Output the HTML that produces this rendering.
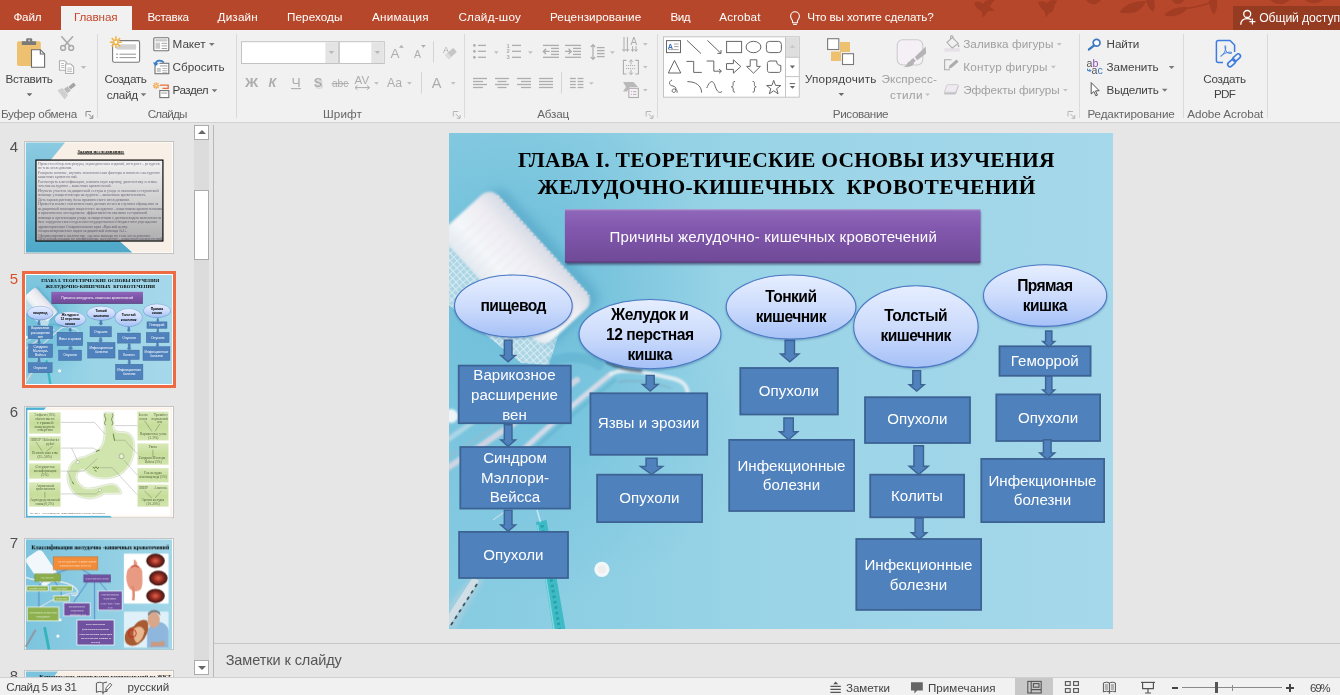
<!DOCTYPE html>
<html><head><meta charset="utf-8"><title>PowerPoint</title><style>
*{box-sizing:border-box;margin:0;padding:0}
html,body{width:1340px;height:695px;overflow:hidden;background:#e6e6e6;font-family:"Liberation Sans",sans-serif}
.t{position:absolute;white-space:nowrap;display:block}
.a{position:absolute}
.dd{position:absolute;width:0;height:0;border-left:3px solid transparent;border-right:3px solid transparent;border-top:3px solid #777}
.sep{position:absolute;width:1px;background:#dadada;top:34px;height:84px}
svg{position:absolute;overflow:visible}

.slide{position:absolute;width:663.5px;height:496.4px;overflow:hidden;background:#97d2e6}
.slide .el{position:absolute;border-radius:50%;border:1px solid #4a78c4;background:linear-gradient(#e6eeff 0%,#cddcfc 50%,#a6c1f7 100%);box-shadow:0 1px 1.5px rgba(40,70,140,.5)}
.slide .bx{position:absolute;background:#4f81bd;border:2px solid #40679a}
.slide .tx{position:absolute;white-space:pre;text-align:center;transform:translateX(-50%)}
</style></head><body><div id="root" style="position:absolute;left:0;top:0;width:1340px;height:695px;overflow:hidden;will-change:transform">
<div class="a" style="left:0;top:0;width:1340px;height:30px;background:#b7472a"></div>
<div class="a" style="left:61px;top:6px;width:71px;height:24px;background:#f1f1f1"></div>
<div class="a" style="left:1233px;top:6px;width:107px;height:24px;background:#943b22"></div>
<span class="t" style="left:13.4px;top:11.4px;font:11.7px/1 'Liberation Sans',sans-serif;height:11.7px;color:#fff;letter-spacing:-0.166px;">Файл</span>
<span class="t" style="left:73.9px;top:11.4px;font:11.7px/1 'Liberation Sans',sans-serif;height:11.7px;color:#c8472b;letter-spacing:-0.133px;">Главная</span>
<span class="t" style="left:147.4px;top:11.4px;font:11.7px/1 'Liberation Sans',sans-serif;height:11.7px;color:#fff;letter-spacing:-0.312px;">Вставка</span>
<span class="t" style="left:217.6px;top:11.4px;font:11.7px/1 'Liberation Sans',sans-serif;height:11.7px;color:#fff;letter-spacing:0.162px;">Дизайн</span>
<span class="t" style="left:287.1px;top:11.4px;font:11.7px/1 'Liberation Sans',sans-serif;height:11.7px;color:#fff;letter-spacing:0.065px;">Переходы</span>
<span class="t" style="left:372.0px;top:11.4px;font:11.7px/1 'Liberation Sans',sans-serif;height:11.7px;color:#fff;letter-spacing:0.234px;">Анимация</span>
<span class="t" style="left:458.4px;top:11.4px;font:11.7px/1 'Liberation Sans',sans-serif;height:11.7px;color:#fff;letter-spacing:0.238px;">Слайд-шоу</span>
<span class="t" style="left:550.0px;top:11.4px;font:11.7px/1 'Liberation Sans',sans-serif;height:11.7px;color:#fff;letter-spacing:0.075px;">Рецензирование</span>
<span class="t" style="left:670.6px;top:11.4px;font:11.7px/1 'Liberation Sans',sans-serif;height:11.7px;color:#fff;letter-spacing:-0.589px;">Вид</span>
<span class="t" style="left:719.3px;top:11.4px;font:11.7px/1 'Liberation Sans',sans-serif;height:11.7px;color:#fff;letter-spacing:0.140px;">Acrobat</span>
<span class="t" style="left:807.3px;top:11.4px;font:11.7px/1 'Liberation Sans',sans-serif;height:11.7px;color:#fff;letter-spacing:-0.134px;">Что вы хотите сделать?</span>
<span class="t" style="left:1259.2px;top:12.3px;font:12.2px/1 'Liberation Sans',sans-serif;height:12.2px;color:#fff;letter-spacing:-0.097px;">Общий доступ</span>
<div class="a" style="left:0;top:30px;width:1340px;height:92px;background:#f1f1f1"></div>
<div class="a" style="left:0;top:122px;width:1340px;height:1px;background:#d2d2d2"></div>
<i class="sep" style="left:97.0px"></i>
<i class="sep" style="left:236.0px"></i>
<i class="sep" style="left:464.0px"></i>
<i class="sep" style="left:656.5px"></i>
<i class="sep" style="left:1079.0px"></i>
<i class="sep" style="left:1183.0px"></i>
<i class="sep" style="left:1266.5px"></i>
<span class="t" style="left:1.0px;top:107.7px;font:11.7px/1 'Liberation Sans',sans-serif;height:11.7px;color:#666;letter-spacing:-0.292px;">Буфер обмена</span>
<span class="t" style="left:147.7px;top:107.7px;font:11.7px/1 'Liberation Sans',sans-serif;height:11.7px;color:#666;letter-spacing:-0.759px;">Слайды</span>
<span class="t" style="left:323.0px;top:107.7px;font:11.7px/1 'Liberation Sans',sans-serif;height:11.7px;color:#666;letter-spacing:0.101px;">Шрифт</span>
<span class="t" style="left:537.3px;top:107.7px;font:11.7px/1 'Liberation Sans',sans-serif;height:11.7px;color:#666;letter-spacing:-0.244px;">Абзац</span>
<span class="t" style="left:832.8px;top:107.7px;font:11.7px/1 'Liberation Sans',sans-serif;height:11.7px;color:#666;letter-spacing:-0.392px;">Рисование</span>
<span class="t" style="left:1087.4px;top:107.7px;font:11.7px/1 'Liberation Sans',sans-serif;height:11.7px;color:#666;letter-spacing:-0.124px;">Редактирование</span>
<span class="t" style="left:1187.2px;top:107.7px;font:11.7px/1 'Liberation Sans',sans-serif;height:11.7px;color:#666;letter-spacing:-0.043px;">Adobe Acrobat</span>
<span class="t" style="left:5.4px;top:72.9px;font:11.7px/1 'Liberation Sans',sans-serif;height:11.7px;color:#444;letter-spacing:-0.287px;">Вставить</span>
<span class="t" style="left:104.4px;top:72.9px;font:11.7px/1 'Liberation Sans',sans-serif;height:11.7px;color:#444;letter-spacing:-0.309px;">Создать</span>
<span class="t" style="left:106.8px;top:88.9px;font:11.7px/1 'Liberation Sans',sans-serif;height:11.7px;color:#444;letter-spacing:-0.329px;">слайд</span>
<span class="t" style="left:172.6px;top:38.0px;font:11.7px/1 'Liberation Sans',sans-serif;height:11.7px;color:#444;letter-spacing:-0.043px;">Макет</span>
<span class="t" style="left:172.6px;top:61.3px;font:11.7px/1 'Liberation Sans',sans-serif;height:11.7px;color:#444;letter-spacing:-0.001px;">Сбросить</span>
<span class="t" style="left:172.6px;top:84.3px;font:11.7px/1 'Liberation Sans',sans-serif;height:11.7px;color:#444;letter-spacing:-0.512px;">Раздел</span>
<span class="t" style="left:805.0px;top:72.9px;font:11.7px/1 'Liberation Sans',sans-serif;height:11.7px;color:#444;letter-spacing:0.171px;">Упорядочить</span>
<span class="t" style="left:881.5px;top:72.9px;font:11.7px/1 'Liberation Sans',sans-serif;height:11.7px;color:#a0a0a0;letter-spacing:0.116px;">Экспресс-</span>
<span class="t" style="left:890.0px;top:88.9px;font:11.7px/1 'Liberation Sans',sans-serif;height:11.7px;color:#a0a0a0;letter-spacing:0.379px;">стили</span>
<span class="t" style="left:963.2px;top:38.3px;font:11.7px/1 'Liberation Sans',sans-serif;height:11.7px;color:#a0a0a0;letter-spacing:0.068px;">Заливка фигуры</span>
<span class="t" style="left:963.2px;top:61.3px;font:11.7px/1 'Liberation Sans',sans-serif;height:11.7px;color:#a0a0a0;letter-spacing:0.214px;">Контур фигуры</span>
<span class="t" style="left:963.2px;top:84.3px;font:11.7px/1 'Liberation Sans',sans-serif;height:11.7px;color:#a0a0a0;letter-spacing:-0.079px;">Эффекты фигуры</span>
<span class="t" style="left:1106.6px;top:38.3px;font:11.7px/1 'Liberation Sans',sans-serif;height:11.7px;color:#444;letter-spacing:-0.157px;">Найти</span>
<span class="t" style="left:1106.6px;top:61.3px;font:11.7px/1 'Liberation Sans',sans-serif;height:11.7px;color:#444;letter-spacing:-0.072px;">Заменить</span>
<span class="t" style="left:1106.6px;top:84.3px;font:11.7px/1 'Liberation Sans',sans-serif;height:11.7px;color:#444;letter-spacing:-0.247px;">Выделить</span>
<span class="t" style="left:1203.3px;top:72.9px;font:11.7px/1 'Liberation Sans',sans-serif;height:11.7px;color:#444;letter-spacing:-0.252px;">Создать</span>
<span class="t" style="left:1214.0px;top:88.4px;font:11.7px/1 'Liberation Sans',sans-serif;height:11.7px;color:#444;letter-spacing:-0.734px;">PDF</span>
<svg width="1340" height="123" viewBox="0 0 1340 123" style="left:0;top:0"><g fill="none" stroke="#fff" stroke-width="1.1"><path d="M792.6 22.8 V21.4 C792.6 19.8,790.6 18.8,790.6 16.2 C790.6 13.6,792.6 11.8,795 11.8 C797.4 11.8,799.4 13.6,799.4 16.2 C799.4 18.8,797.4 19.8,797.4 21.4 V22.8 Z"/><path d="M793.2 24.4 H796.8"/></g><g fill="none" stroke="#fff" stroke-width="1.3"><circle cx="1247.2" cy="14" r="3.5"/><path d="M1240.8 24.8 C1240.8 20.4,1243.4 18.6,1247.2 18.6 C1249 18.6,1250.2 19,1251.2 19.6"/><path d="M1252.4 18.6 V24.6 M1249.4 21.6 H1255.4"/></g><g fill="#a23d24"><path d="M974 3 q5 -3 9 1 q2 -4 7 -4 l5 0 q-4 3 -5 7 q3 1 5 4 q-5 -1 -8 1 q-1 4 -5 5 q1 -4 -1 -6 q-5 -2 -7 -8 Z"/><path d="M1038 2 q5 -2 9 1 q2 -3 7 -3 l4 1 q-4 3 -4 7 q-1 5 -5 5 q-1 3 -4 4 q1 -4 -1 -6 q-4 -3 -6 -9 Z"/><path d="M1086 0 h15 q-4 5 -9 4 q-4 -1 -6 -4 Z"/><path d="M1119 12 q10 -12 27 -11 q-4 10 -14 12 q-7 1 -13 -1 Z"/><path d="M1146 0 h8 q2 7 -1 12 q-6 -5 -7 -12 Z"/><path d="M1164 15 q8 -9 24 -8 q-5 8 -14 9 q-6 1 -10 -1 Z"/><path d="M1209 0 h8 q1 8 -3 15 q-5 -7 -5 -15 Z"/><path d="M1172 0 h12 q-2 4 -7 4 q-3 0 -5 -4 Z"/><path d="M1270 0 h20 q-6 5 -12 4 q-5 -1 -8 -4 Z"/><path d="M1305 0 h18 q-5 4 -10 3 q-5 0 -8 -3 Z"/></g><path d="M1180 9 Q1196 8 1212 2" stroke="#a23d24" stroke-width="1.4" fill="none"/><rect x="17" y="41.3" width="23.8" height="24.8" rx="2" fill="#edc16f"/><rect x="26.2" y="38.3" width="6" height="4.5" rx="1.2" fill="#7a7a7a"/><rect x="21.8" y="41.2" width="14.3" height="3.7" rx=".6" fill="#7a7a7a"/><circle cx="29.2" cy="40.6" r="1" fill="#d0d0d0"/><path d="M31.5 49.7 H40.3 L44.6 54 V67.2 H31.5 Z" fill="#fff" stroke="#6b6b6b" stroke-width="1.1"/><path d="M40.3 49.7 V54 H44.6" fill="none" stroke="#6b6b6b" stroke-width="1.1"/><g fill="none" stroke="#a9a9a9" stroke-width="1.5"><circle cx="63.1" cy="47.9" r="2.4"/><circle cx="71.2" cy="47.9" r="2.4"/></g><path d="M61.8 36.8 L70 46 M72.6 36.8 L64.4 46" stroke="#a9a9a9" stroke-width="1.6" stroke-linecap="round"/><g fill="#fff" stroke="#b0b0b0" stroke-width="1.1"><path d="M59.5 60.7 H64.5 L66.8 63 V70.3 H59.5 Z"/><path d="M65.6 64 H70.8 L73.6 66.8 V73.5 H65.6 Z"/></g><path d="M61 63.5 H64 M61 65.5 H64.5 M61 67.5 H64.5 M67.2 68 H72 M67.2 69.8 H72 M67.2 71.6 H72" stroke="#b8b8b8" stroke-width=".9"/><path d="M80.7 66.0 H86.3 L83.5 69.0 Z" fill="#bdbdbd"/><g transform="translate(67.4,89.8) rotate(-38) scale(.9)"><rect x="3" y="-2" width="7.5" height="4" rx="1" fill="#a4a4a4"/><rect x="-2.5" y="-3" width="5" height="6" fill="#b9b9b9"/><path d="M-3 -5 L-9 -6.5 L-9 6.5 L-3 5 Z" fill="#cfcfcf"/></g><path d="M26.7 93.2 H32.3 L29.5 96.2 Z" fill="#6a6a6a"/><path d="M86 116.5 V111.5 H91" fill="none" stroke="#8a8a8a" stroke-width="1"/><path d="M88.5 114.0 L92.5 118.0 M89.5 118.3 H92.8 V115.0" fill="none" stroke="#8a8a8a" stroke-width="1"/><rect x="112.6" y="40.6" width="27" height="21.7" rx="1.8" fill="#fff" stroke="#7a7a7a" stroke-width="1.1"/><rect x="116.5" y="44.3" width="19.6" height="5.3" fill="#d2d2d2"/><path d="M116 54.2 H118 M119.5 54.2 H136 M116 57.6 H118 M119.5 57.6 H136" stroke="#8a8a8a" stroke-width=".9"/><circle cx="115.9" cy="42.2" r="3.72" fill="#fff"/><path d="M118.18 42.20 L121.90 42.20 M117.51 43.81 L120.14 46.44 M115.90 44.48 L115.90 48.20 M114.29 43.81 L111.66 46.44 M113.62 42.20 L109.90 42.20 M114.29 40.59 L111.66 37.96 M115.90 39.92 L115.90 36.20 M117.51 40.59 L120.14 37.96 " stroke="#f0b44c" stroke-width="1.6" fill="none"/><circle cx="115.9" cy="42.2" r="2.16" fill="#fff" stroke="#f0b44c" stroke-width="1.44"/><path d="M140.7 93.3 H146.3 L143.5 96.3 Z" fill="#777"/><rect x="153.8" y="37.8" width="15" height="13" rx="1" fill="#fff" stroke="#727272" stroke-width="1.1"/><rect x="155.3" y="39.2" width="12" height="2.2" fill="#c9c9c9"/><rect x="155.5" y="42.6" width="4.6" height="6.2" fill="#c9c9c9"/><path d="M161.6 43.3 H167.2 M161.6 45.9 H167.2 M161.6 48.5 H167.2" stroke="#9a9a9a" stroke-width=".9"/><path d="M209.0 42.9 H214.6 L211.8 45.9 Z" fill="#777"/><rect x="155" y="63.3" width="13.8" height="10.4" fill="#fff" stroke="#727272" stroke-width="1.1"/><rect x="160" y="65" width="7.4" height="1.8" fill="#c9c9c9"/><rect x="156.8" y="68" width="4" height="4.2" fill="#c9c9c9"/><path d="M162.3 68.5 H167.3 M162.3 70.5 H167.3 M162.3 72.3 H167.3" stroke="#aaa" stroke-width=".8"/><rect x="152.5" y="60.3" width="7" height="5.5" fill="#f1f1f1"/><path d="M163.8 62.6 C161.5 59.6,156.8 59.8,155.2 63.8" fill="none" stroke="#3a7cc3" stroke-width="1.7"/><path d="M153 62.2 L155.1 66.6 L158.6 63.4 Z" fill="#3a7cc3"/><circle cx="156.2" cy="85.6" r="2.11" fill="#fff"/><path d="M157.49 85.60 L159.60 85.60 M157.11 86.51 L158.60 88.00 M156.20 86.89 L156.20 89.00 M155.29 86.51 L153.80 88.00 M154.91 85.60 L152.80 85.60 M155.29 84.69 L153.80 83.20 M156.20 84.31 L156.20 82.20 M157.11 84.69 L158.60 83.20 " stroke="#f0a64a" stroke-width="1.1" fill="none"/><circle cx="156.2" cy="85.6" r="1.22" fill="#fff" stroke="#f0a64a" stroke-width="0.99"/><path d="M160 85.2 H168.2 V88.3 H162.5" fill="none" stroke="#e8703a" stroke-width="1.3"/><rect x="159.8" y="90.6" width="9" height="7" fill="#fff" stroke="#727272" stroke-width="1.1"/><rect x="161.3" y="92.2" width="6" height="1.8" fill="#c9c9c9"/><path d="M211.7 89.2 H217.3 L214.5 92.2 Z" fill="#777"/><rect x="241.5" y="41.7" width="96.8" height="21.8" fill="#fff" stroke="#c3c3c3" stroke-width="1"/><rect x="325.3" y="42.2" width="12.5" height="20.8" fill="#e4e4e4"/><rect x="339.3" y="41.7" width="45" height="21.8" fill="#fff" stroke="#c3c3c3" stroke-width="1"/><rect x="371.3" y="42.2" width="12.5" height="20.8" fill="#e4e4e4"/><path d="M328.8 51.1 H334.0 L331.4 53.9 Z" fill="#b6b6b6"/><path d="M374.8 51.1 H380.0 L377.4 53.9 Z" fill="#b6b6b6"/><text x="390.6" y="57.8" font-size="13.5" font-family="'Liberation Sans',sans-serif" fill="#adadad">A</text><path d="M399 47.8 L401.4 45 L403.8 47.8 Z" fill="#adadad"/><text x="414" y="57.8" font-size="10.5" font-family="'Liberation Sans',sans-serif" fill="#adadad">A</text><path d="M421 45 H425.8 L423.4 47.8 Z" fill="#adadad"/><path d="M433.5 41.2 V62.6" stroke="#d4d4d4" stroke-width="1"/><text x="443" y="53" font-size="9" font-family="'Liberation Sans',sans-serif" fill="#adadad">A</text><g transform="translate(451,53.5) rotate(-42)"><rect x="-5.5" y="-2.8" width="11" height="5.6" rx="1" fill="#c6c6c6"/><rect x="-5.5" y="-2.8" width="3.6" height="5.6" rx="1" fill="#dcdcdc"/></g><text x="245" y="87.4" font-size="12.6" font-weight="bold" font-family="'Liberation Sans',sans-serif" fill="#adadad" textLength="13.2" lengthAdjust="spacingAndGlyphs">Ж</text><text x="268.6" y="87.4" font-size="12.6" font-weight="bold" font-style="italic" font-family="'Liberation Sans',sans-serif" fill="#adadad">К</text><text x="291.4" y="86.6" font-size="12.2" font-family="'Liberation Sans',sans-serif" fill="#adadad" textLength="9.2" lengthAdjust="spacingAndGlyphs">Ч</text><path d="M291 88.6 H301" stroke="#adadad" stroke-width="1.1"/><text x="315" y="88.6" font-size="13" font-weight="bold" font-family="'Liberation Sans',sans-serif" fill="#dcdcdc">S</text><text x="313.8" y="87.4" font-size="13" font-weight="bold" font-family="'Liberation Sans',sans-serif" fill="#adadad">S</text><text x="332" y="87" font-size="10.5" font-family="'Liberation Sans',sans-serif" fill="#adadad" textLength="16.2" lengthAdjust="spacingAndGlyphs">abc</text><path d="M331.5 83.6 H349" stroke="#adadad" stroke-width="1"/><text x="354.6" y="84.2" font-size="10.5" font-family="'Liberation Sans',sans-serif" fill="#adadad" textLength="14.6" lengthAdjust="spacingAndGlyphs">AV</text><path d="M355 87.6 H369.5 M357.5 85.4 L355 87.6 L357.5 89.8 M367 85.4 L369.5 87.6 L367 89.8" stroke="#adadad" stroke-width="1" fill="none"/><path d="M374.0 82.1 H378.8 L376.4 84.7 Z" fill="#c0c0c0"/><text x="387" y="87.4" font-size="12.6" font-family="'Liberation Sans',sans-serif" fill="#adadad" textLength="15" lengthAdjust="spacingAndGlyphs">Aa</text><path d="M407.0 82.1 H411.8 L409.4 84.7 Z" fill="#c0c0c0"/><path d="M421.5 72 V93.5" stroke="#d4d4d4" stroke-width="1"/><text x="431.8" y="87.6" font-size="14.5" font-family="'Liberation Sans',sans-serif" fill="#adadad">A</text><path d="M450.8 82.1 H455.6 L453.2 84.7 Z" fill="#c0c0c0"/><path d="M453.3 116.5 V111.5 H458.3" fill="none" stroke="#b4b4b4" stroke-width="1"/><path d="M455.8 114.0 L459.8 118.0 M456.8 118.3 H460.1 V115.0" fill="none" stroke="#b4b4b4" stroke-width="1"/><circle cx="474.4" cy="45.4" r="1.35" fill="#adadad"/><path d="M478 45.4 H486" stroke="#adadad" stroke-width="1.3"/><circle cx="474.4" cy="51.3" r="1.35" fill="#adadad"/><path d="M478 51.3 H486" stroke="#adadad" stroke-width="1.3"/><circle cx="474.4" cy="57.3" r="1.35" fill="#adadad"/><path d="M478 57.3 H486" stroke="#adadad" stroke-width="1.3"/><path d="M493.9 51.3 H498.7 L496.3 53.9 Z" fill="#c0c0c0"/><text x="506.6" y="47.5" font-size="5.8" font-weight="bold" font-family="'Liberation Sans',sans-serif" fill="#adadad">1</text><path d="M512 45.4 H521" stroke="#adadad" stroke-width="1.3"/><text x="506.6" y="53.4" font-size="5.8" font-weight="bold" font-family="'Liberation Sans',sans-serif" fill="#adadad">2</text><path d="M512 51.3 H521" stroke="#adadad" stroke-width="1.3"/><text x="506.6" y="59.4" font-size="5.8" font-weight="bold" font-family="'Liberation Sans',sans-serif" fill="#adadad">3</text><path d="M512 57.3 H521" stroke="#adadad" stroke-width="1.3"/><path d="M528.0 51.3 H532.8 L530.4 53.9 Z" fill="#c0c0c0"/><path d="M543 45.4 H559" stroke="#adadad" stroke-width="1.3"/><path d="M543 57.3 H559" stroke="#adadad" stroke-width="1.3"/><path d="M551 48.4 H559" stroke="#adadad" stroke-width="1.3"/><path d="M551 51.4 H559" stroke="#adadad" stroke-width="1.3"/><path d="M551 54.4 H559" stroke="#adadad" stroke-width="1.3"/><path d="M543.4 51.4 H549.6 M546 48.8 L543.4 51.4 L546 54" stroke="#adadad" stroke-width="1.4" fill="none"/><path d="M565 45.4 H581" stroke="#adadad" stroke-width="1.3"/><path d="M565 57.3 H581" stroke="#adadad" stroke-width="1.3"/><path d="M573 48.4 H581" stroke="#adadad" stroke-width="1.3"/><path d="M573 51.4 H581" stroke="#adadad" stroke-width="1.3"/><path d="M573 54.4 H581" stroke="#adadad" stroke-width="1.3"/><path d="M565 51.4 H571.2 M568.6 48.8 L571.2 51.4 L568.6 54" stroke="#adadad" stroke-width="1.4" fill="none"/><path d="M593 44.6 V59.4 M590.8 47 L593 44.6 L595.2 47 M590.8 57 L593 59.4 L595.2 57" stroke="#adadad" stroke-width="1.2" fill="none"/><path d="M597 47.6 H604.6" stroke="#adadad" stroke-width="1.3"/><path d="M597 50.6 H604.6" stroke="#adadad" stroke-width="1.3"/><path d="M597 53.6 H604.6" stroke="#adadad" stroke-width="1.3"/><path d="M597 56.6 H604.6" stroke="#adadad" stroke-width="1.3"/><path d="M610.0 51.3 H614.8 L612.4 53.9 Z" fill="#c0c0c0"/><path d="M624 37 V51 M627.4 37 V51 M622.4 49.2 L624 51.4 L625.6 49.2 M625.8 49.2 L627.4 51.4 L629 49.2" stroke="#adadad" stroke-width="1" fill="none"/><text x="630.6" y="44.8" font-size="10" font-family="'Liberation Sans',sans-serif" fill="#adadad">A</text><path d="M632.6 46.2 V51 M636 46.2 V51 M631.2 49.4 L632.6 51.4 L634 49.4 M634.6 49.4 L636 51.4 L637.4 49.4" stroke="#adadad" stroke-width="1" fill="none"/><path d="M642.9 43.1 H647.7 L645.3 45.7 Z" fill="#c0c0c0"/><path d="M626.5 60.4 H623.4 V74 H626.5 M635.3 60.4 H638.4 V74 H635.3" stroke="#adadad" stroke-width="1.1" fill="none"/><path d="M626 65.6 H636 M626 68.6 H636" stroke="#adadad" stroke-width="1" stroke-dasharray="1.2 .8"/><path d="M631 59.8 V64.4 M629 61.8 L631 59.8 L633 61.8 M631 70 V74.6 M629 72.6 L631 74.6 L633 72.6" stroke="#adadad" stroke-width="1" fill="none"/><path d="M642.9 65.9 H647.7 L645.3 68.5 Z" fill="#c0c0c0"/><path d="M623 82 H633.5 L638 87 H629.5 L627 91.5 H623 L626 87 Z" fill="#b9b9b9"/><rect x="628.8" y="88.3" width="9.6" height="9.2" fill="#f6f0f6" stroke="#adadad" stroke-width="1.1"/><path d="M631 91.6 H632 M633 91.6 H636.4 M631 94.4 H632 M633 94.4 H636.4" stroke="#adadad" stroke-width=".9"/><path d="M642.9 89.0 H647.7 L645.3 91.6 Z" fill="#c0c0c0"/><path d="M473 78.5 H487" stroke="#adadad" stroke-width="1.3"/><path d="M495 78.5 H509" stroke="#adadad" stroke-width="1.3"/><path d="M517 78.5 H531" stroke="#adadad" stroke-width="1.3"/><path d="M539 78.5 H553" stroke="#adadad" stroke-width="1.3"/><path d="M570 78.5 H575.8" stroke="#adadad" stroke-width="1.3"/><path d="M577.6 78.5 H583.4" stroke="#adadad" stroke-width="1.3"/><path d="M473 81.5 H483" stroke="#adadad" stroke-width="1.3"/><path d="M497.5 81.5 H506.5" stroke="#adadad" stroke-width="1.3"/><path d="M521 81.5 H531" stroke="#adadad" stroke-width="1.3"/><path d="M539 81.5 H553" stroke="#adadad" stroke-width="1.3"/><path d="M570 81.5 H575.8" stroke="#adadad" stroke-width="1.3"/><path d="M577.6 81.5 H583.4" stroke="#adadad" stroke-width="1.3"/><path d="M473 84.5 H487" stroke="#adadad" stroke-width="1.3"/><path d="M495 84.5 H509" stroke="#adadad" stroke-width="1.3"/><path d="M517 84.5 H531" stroke="#adadad" stroke-width="1.3"/><path d="M539 84.5 H553" stroke="#adadad" stroke-width="1.3"/><path d="M570 84.5 H575.8" stroke="#adadad" stroke-width="1.3"/><path d="M577.6 84.5 H583.4" stroke="#adadad" stroke-width="1.3"/><path d="M473 87.5 H483" stroke="#adadad" stroke-width="1.3"/><path d="M497.5 87.5 H506.5" stroke="#adadad" stroke-width="1.3"/><path d="M521 87.5 H531" stroke="#adadad" stroke-width="1.3"/><path d="M539 87.5 H553" stroke="#adadad" stroke-width="1.3"/><path d="M570 87.5 H575.8" stroke="#adadad" stroke-width="1.3"/><path d="M577.6 87.5 H583.4" stroke="#adadad" stroke-width="1.3"/><path d="M561.5 72.2 V93.4" stroke="#d4d4d4" stroke-width="1"/><path d="M589.0 82.2 H593.8 L591.4 84.8 Z" fill="#c0c0c0"/><path d="M646.2 116.5 V111.5 H651.2" fill="none" stroke="#b4b4b4" stroke-width="1"/><path d="M648.7 114.0 L652.7 118.0 M649.7 118.3 H653.0 V115.0" fill="none" stroke="#b4b4b4" stroke-width="1"/><rect x="663.5" y="36.8" width="135.8" height="60.4" fill="#fff" stroke="#c3c3c3" stroke-width="1"/><rect x="785.5" y="37.3" width="13.3" height="19.8" fill="#dedede"/><path d="M785.5 36.8 V97.2 M785.5 57.3 H799.3 M785.5 76.6 H799.3" stroke="#c3c3c3" stroke-width="1" fill="none"/><path d="M789.8 47.8 L792.4 45 L795 47.8 Z" fill="#c4c4c4"/><path d="M789.8 65.6 H795.0 L792.4 68.4 Z" fill="#666"/><path d="M789.6 83.6 H795.2" stroke="#666" stroke-width="1"/><path d="M789.8 86.0 H795.0 L792.4 88.8 Z" fill="#666"/><g fill="none" stroke="#666" stroke-width="1"><rect x="666.5" y="40.6" width="14" height="12" fill="#fff"/><path d="M674 44 H678.6 M674 46.6 H678.6 M668.4 49.6 H678.6" stroke="#999" stroke-width=".9"/><path d="M687 40.4 L701 53.6"/><path d="M707.4 40.4 L721 53.4 M717.4 53.4 H721 V50"/><rect x="726.6" y="41.4" width="15" height="11.2"/><ellipse cx="753.5" cy="47" rx="7.4" ry="5.7"/><rect x="766.4" y="41.4" width="15" height="11.2" rx="3"/><path d="M674.5 60.4 L680.8 73 H668.3 Z"/><path d="M686.4 61.4 H693.7 V72.4 H701.8"/><path d="M706.6 61 H713.8 V71.2 H721.2 M719 69 L721.4 71.2 L719 73.4"/><path d="M726.5 63.6 H733.4 V59.8 L740.8 66.5 L733.4 73.2 V69.4 H726.5 Z"/><path d="M750.2 59.8 H756.8 V66.4 H760.4 L753.5 73.2 L746.6 66.4 H750.2 Z"/><path d="M770 61 H776.6 C776.6 64,778 65.4,780.8 65.4 V70.4 C780.8 71.6,780 72.4,778.8 72.4 H769.4 C768.2 72.4,767.4 71.6,767.4 70.4 V63.6 C767.4 62,768.4 61,770 61 Z"/><path d="M672 80 C668 82,669 85.5,673 86 C677.5 86.8,676.5 92.5,673.6 92.4 C671 92,672 88.4,674.6 89 C677 89.6,677.6 91.6,677 92.8"/><path d="M687.4 81.6 C695.5 81.6,701.6 85.6,701.6 92.6"/><path d="M706.8 88 C709.4 81,712.6 79.6,714.6 84.6 C716.6 90.6,718.4 94,722 91.6"/><path d="M735 81.4 C732.6 81.4,733.2 83.2,733.2 84.6 C733.2 86,732.6 86.8,731.4 86.8 C732.6 86.8,733.2 87.6,733.2 89 C733.2 90.6,732.6 92.2,735 92.2"/><path d="M752.6 81.4 C755 81.4,754.4 83.2,754.4 84.6 C754.4 86,755 86.8,756.2 86.8 C755 86.8,754.4 87.6,754.4 89 C754.4 90.6,755 92.2,752.6 92.2"/><path d="M773.7 80.4 L775.5 85.4 L780.8 85.5 L776.6 88.7 L778.1 93.8 L773.7 90.8 L769.3 93.8 L770.8 88.7 L766.6 85.5 L771.9 85.4 Z"/></g><text x="667.8" y="48.6" font-size="7.2" font-weight="bold" font-family="'Liberation Sans',sans-serif" fill="#3a6fc0">A</text><rect x="840" y="42" width="10" height="10" fill="#edc16f"/><rect x="831" y="51.5" width="10" height="9.5" fill="#edc16f"/><rect x="827.6" y="38.7" width="11.2" height="10.8" fill="#fff" stroke="#7a7a7a" stroke-width="1.1"/><rect x="842.5" y="53.7" width="11" height="10.8" fill="#fff" stroke="#7a7a7a" stroke-width="1.1"/><path d="M838.5 93.1 H844.1 L841.3 96.1 Z" fill="#6a6a6a"/><rect x="897.2" y="39.8" width="25.6" height="25.2" rx="5.5" fill="#f4f0f6" stroke="#cbcbcb" stroke-width="1.1"/><path d="M903.4 67.2 C905.5 66.6,906.8 64.6,907.6 62.8 C909.4 60.6,912.6 60.4,913.8 62.6 C914.4 64.6,912.4 67.2,903.4 67.2 Z" fill="#b4b4b4"/><path d="M910.2 60.2 L913.4 58 L915.8 61 L913 63 Z" fill="#b4b4b4"/><path d="M914.8 57 L925.8 46.4 L926 53.4 L917.2 60.2 Z" fill="#b4b4b4"/><path d="M925.2 93.5 H930.0 L927.6 96.1 Z" fill="#c0c0c0"/><rect x="944.4" y="48.2" width="15.4" height="3.4" fill="#e6dfe8"/><path d="M947 42.4 L952.4 37.6 L958.2 43.4 L952.2 48 Z M950.6 39.2 V36.4 C950.6 35.4,953 35.4,953 36.6 V38.2" fill="none" stroke="#adadad" stroke-width="1.1"/><path d="M958.4 44 C959.6 45.8,959.8 47,958.6 47.2 C957.4 47,957.4 45.6,958.4 44 Z" fill="#adadad"/><path d="M1056.8 43.1 H1061.6 L1059.2 45.7 Z" fill="#c0c0c0"/><path d="M951.5 59.8 H944.6 V69.8 H950" fill="none" stroke="#adadad" stroke-width="1.1"/><path d="M948.4 68.8 L949.6 65.4 L956.4 59.6 L958.6 61.8 L951.6 67.8 Z" fill="#adadad"/><path d="M1051.0 65.8 H1055.8 L1053.4 68.4 Z" fill="#c0c0c0"/><path d="M948 85 H957.4 C958.6 85,959 85.8,958.6 86.8 L956.4 93 C956 94,955.2 94.6,954 94.6 H945.4 C944.2 94.6,943.8 93.8,944.2 92.8 L946.2 86.6 C946.6 85.6,947 85,948 85 Z" fill="#c4c4c4"/><path d="M948.4 84.6 H957 C958 84.6,958.4 85.2,958 86.2 L956.2 91 C955.8 92,955.2 92.4,954.2 92.4 H945.8 C944.8 92.4,944.4 91.8,944.8 90.8 L946.6 86 C947 85,947.4 84.6,948.4 84.6 Z" fill="#efe9f1" stroke="#c9c9c9" stroke-width=".8"/><path d="M1063.0 89.0 H1067.8 L1065.4 91.6 Z" fill="#c0c0c0"/><path d="M1068 116.5 V111.5 H1073" fill="none" stroke="#b4b4b4" stroke-width="1"/><path d="M1070.5 114.0 L1074.5 118.0 M1071.5 118.3 H1074.8 V115.0" fill="none" stroke="#b4b4b4" stroke-width="1"/><circle cx="1096.6" cy="42.8" r="3.4" fill="#fff" stroke="#3a78c2" stroke-width="1.7"/><path d="M1094.2 45.4 L1089 49.4" stroke="#3a78c2" stroke-width="2.4" stroke-linecap="round"/><text x="1086.6" y="66.8" font-size="10.6" font-family="'Liberation Sans',sans-serif" fill="#555">a</text><text x="1092.4" y="66.8" font-size="10.6" font-family="'Liberation Sans',sans-serif" fill="#8a4fb0">b</text><text x="1091.6" y="74" font-size="10.6" font-family="'Liberation Sans',sans-serif" fill="#555">a</text><text x="1097.4" y="74" font-size="10.6" font-family="'Liberation Sans',sans-serif" fill="#3a78c2">c</text><path d="M1087.6 68.6 V70.6 H1090.6 M1089.4 69.2 L1090.8 70.6 L1089.4 72" stroke="#3a78c2" stroke-width="1" fill="none"/><path d="M1168.8 66.0 H1174.4 L1171.6 69.0 Z" fill="#777"/><path d="M1091.2 82.6 V94 L1093.9 91.5 L1095.8 95.8 L1097.4 95.1 L1095.5 90.9 L1099.2 90.7 Z" fill="#fff" stroke="#555" stroke-width="1"/><path d="M1161.9 88.8 H1167.5 L1164.7 91.8 Z" fill="#777"/><path d="M1218.5 40.4 H1230 L1234.6 45 V52 M1223 62.6 H1218.5 C1217.2 62.6,1216.4 61.8,1216.4 60.6 V42.4 C1216.4 41.2,1217.2 40.4,1218.5 40.4" fill="none" stroke="#3d7be0" stroke-width="1.5"/><path d="M1225.2 45.6 C1224.4 47.6,1225.6 50.6,1227.2 52.6 C1228.8 53.6,1231.6 53.8,1232 52.8 C1231.6 51.8,1228.4 52,1226.4 52.8 C1224 53.6,1221 55.4,1220.6 56.2 C1221.2 56.8,1223.4 54.4,1224.6 52 C1225.8 49.6,1226.2 46.2,1225.2 45.6 Z" fill="none" stroke="#3d7be0" stroke-width=".9"/><g fill="none" stroke="#3d7be0" stroke-width="1.6"><rect x="-4.4" y="-2.3" width="8.8" height="4.6" rx="2.3" transform="translate(1236.6,57.6) rotate(-42)"/><rect x="-4.4" y="-2.3" width="8.8" height="4.6" rx="2.3" transform="translate(1231.6,63) rotate(-42)"/></g></svg>
<div class="a" style="left:213px;top:125px;width:1px;height:552px;background:#b8b8b8"></div>
<div class="a" style="left:194px;top:125px;width:15px;height:550px;background:#dcdcdc"></div>
<div class="a" style="left:194px;top:125px;width:15px;height:15px;background:#fff;border:1px solid #ababab"></div>
<div class="a" style="left:194px;top:190px;width:15px;height:70px;background:#fff;border:1px solid #ababab"></div>
<div class="a" style="left:194px;top:660px;width:15px;height:15px;background:#fff;border:1px solid #ababab"></div>
<i class="a" style="left:197.5px;top:130px;width:0;height:0;border-left:4px solid transparent;border-right:4px solid transparent;border-bottom:4px solid #666"></i>
<i class="a" style="left:197.5px;top:665.5px;width:0;height:0;border-left:4px solid transparent;border-right:4px solid transparent;border-top:4px solid #666"></i>
<span class="t" style="left:9.8px;top:138.9px;font:15px/1 'Liberation Sans',sans-serif;color:#505050">4</span>
<span class="t" style="left:9.8px;top:271.2px;font:15px/1 'Liberation Sans',sans-serif;color:#d9502b">5</span>
<span class="t" style="left:9.8px;top:403.5px;font:15px/1 'Liberation Sans',sans-serif;color:#505050">6</span>
<span class="t" style="left:9.8px;top:535.3px;font:15px/1 'Liberation Sans',sans-serif;color:#505050">7</span>
<span class="t" style="left:9.8px;top:667.7px;font:15px/1 'Liberation Sans',sans-serif;color:#505050">8</span>
<div class="a" style="left:24.4px;top:141.2px;width:149.3px;height:112.7px;overflow:hidden;background:#fff;border:1px solid #c4c4c4"></div><svg style="left:24.4px;top:141.2px;overflow:hidden" width="149.3" height="112.7" viewBox="25 30 837 632"><defs><linearGradient id="g4a" x1="0" y1="0" x2="0" y2="1"><stop offset="0" stop-color="#8ccbe2"/><stop offset="1" stop-color="#4ea8c8"/></linearGradient><linearGradient id="g4b" x1="0" y1="0" x2="0" y2="1"><stop offset="0" stop-color="#f2f2f2"/><stop offset="1" stop-color="#aeaeae"/></linearGradient></defs><rect x="35" y="38" width="820" height="617" fill="#f8efe6"/><polygon points="35,38 255,38 125,197 632,655 35,655" fill="url(#g4a)"/><rect x="92" y="137" width="712" height="454" fill="url(#g4b)" stroke="#000" stroke-width="6.5"/><text x="456" y="97" text-anchor="middle" font-size="25" font-weight="bold" font-family="'Liberation Serif',serif" fill="#000" text-decoration="underline" textLength="262">Задачи исследования:</text><rect x="325" y="98" width="262" height="3" fill="#000"/><text x="103" y="163" font-size="19" font-family="'Liberation Serif',serif" fill="#3d3350" opacity=".7" textLength="682" lengthAdjust="spacingAndGlyphs">Провести обзор литературы, периодических изданий, интернет – ресурсов</text><text x="103" y="186" font-size="19" font-family="'Liberation Serif',serif" fill="#3d3350" opacity=".7" textLength="192" lengthAdjust="spacingAndGlyphs">по теме исследования.</text><text x="103" y="215" font-size="19" font-family="'Liberation Serif',serif" fill="#3d3350" opacity=".7" textLength="682" lengthAdjust="spacingAndGlyphs">Раскрыть понятие, изучить этиологические факторы и патогенез желудочно</text><text x="103" y="238" font-size="19" font-family="'Liberation Serif',serif" fill="#3d3350" opacity=".7" textLength="222" lengthAdjust="spacingAndGlyphs">кишечных кровотечений.</text><text x="103" y="265" font-size="19" font-family="'Liberation Serif',serif" fill="#3d3350" opacity=".7" textLength="667" lengthAdjust="spacingAndGlyphs">Рассмотреть классификацию, клиническую картину, диагностику и этапы</text><text x="103" y="287" font-size="19" font-family="'Liberation Serif',serif" fill="#3d3350" opacity=".7" textLength="412" lengthAdjust="spacingAndGlyphs">лечения желудочно – кишечных кровотечений.</text><text x="103" y="315" font-size="19" font-family="'Liberation Serif',serif" fill="#3d3350" opacity=".7" textLength="677" lengthAdjust="spacingAndGlyphs">Изучить участие медицинской сестры в уходе и оказании сестринской</text><text x="103" y="337" font-size="19" font-family="'Liberation Serif',serif" fill="#3d3350" opacity=".7" textLength="607" lengthAdjust="spacingAndGlyphs">помощи у пациентов при желудочно – кишечных кровотечениях.</text><text x="103" y="365" font-size="19" font-family="'Liberation Serif',serif" fill="#3d3350" opacity=".7" textLength="517" lengthAdjust="spacingAndGlyphs">Дать характеристику базы практического исследования.</text><text x="103" y="388" font-size="19" font-family="'Liberation Serif',serif" fill="#3d3350" opacity=".7" textLength="675" lengthAdjust="spacingAndGlyphs">Провести анализ статистических данных по всем случаям обращения за</text><text x="103" y="416" font-size="19" font-family="'Liberation Serif',serif" fill="#3d3350" opacity=".7" textLength="697" lengthAdjust="spacingAndGlyphs">медицинской помощью пациентов с желудочно – кишечными кровотечениями</text><text x="103" y="439" font-size="19" font-family="'Liberation Serif',serif" fill="#3d3350" opacity=".7" textLength="612" lengthAdjust="spacingAndGlyphs">и практическое исследование эффективности оказания сестринской</text><text x="103" y="466" font-size="19" font-family="'Liberation Serif',serif" fill="#3d3350" opacity=".7" textLength="692" lengthAdjust="spacingAndGlyphs">помощи и организации ухода за пациентами с данным видом патологии на</text><text x="103" y="490" font-size="19" font-family="'Liberation Serif',serif" fill="#3d3350" opacity=".7" textLength="667" lengthAdjust="spacingAndGlyphs">базе хирургического отделения государственного бюджетного учреждения</text><text x="103" y="516" font-size="19" font-family="'Liberation Serif',serif" fill="#3d3350" opacity=".7" textLength="502" lengthAdjust="spacingAndGlyphs">здравоохранения Ставропольского края «Краевой центр</text><text x="103" y="541" font-size="19" font-family="'Liberation Serif',serif" fill="#3d3350" opacity=".7" textLength="502" lengthAdjust="spacingAndGlyphs">специализированных видов медицинской помощи №1».</text><text x="103" y="566" font-size="19" font-family="'Liberation Serif',serif" fill="#3d3350" opacity=".7" textLength="632" lengthAdjust="spacingAndGlyphs">Сформулировать заключение, сделать выводы по теме исследования.</text><text x="103" y="588" font-size="19" font-family="'Liberation Serif',serif" fill="#3d3350" opacity=".7" textLength="697" lengthAdjust="spacingAndGlyphs">Дать рекомендации по профилактике желудочно – кишечных кровотечений</text></svg>
<div class="a" style="left:22px;top:271px;width:154px;height:117.3px;background:#ed6a43"></div>
<div class="a" style="left:24.8px;top:273.8px;width:148.4px;height:111.7px;background:#fff"></div>
<div class="a" style="left:26.1px;top:275.1px;width:145.8px;height:109.1px;overflow:hidden;background:#fff"><div class="slide" style="left:0px;top:0px;transform-origin:0 0;transform:scale(0.21974378296910327)"><div class="a" style="left:0;top:0;width:663.5px;height:496px;background:
radial-gradient(ellipse 200px 170px at 90px 300px,rgba(112,192,220,.7),rgba(112,192,220,0) 100%),
radial-gradient(ellipse 190px 200px at 80px 150px,rgba(92,180,212,.7),rgba(92,180,212,0) 100%),
linear-gradient(90deg,#86cbe1 0%,#90d0e4 25%,#9bd4e7 50%,#a5d8ea 100%)"></div>
<svg width="663.5" height="496" viewBox="0 0 663.5 496" style="left:0;top:0">
<defs><filter id="b2" x="-20%" y="-20%" width="140%" height="140%"><feGaussianBlur stdDeviation="2"/></filter>
<filter id="b1" x="-20%" y="-20%" width="140%" height="140%"><feGaussianBlur stdDeviation="1"/></filter>
<filter id="b05" x="-20%" y="-20%" width="140%" height="140%"><feGaussianBlur stdDeviation=".6"/></filter>
<filter id="b4" x="-20%" y="-20%" width="140%" height="140%"><feGaussianBlur stdDeviation="4"/></filter>
<linearGradient id="tube" x1="0" x2="1" y1="0" y2="0"><stop offset="0" stop-color="#e2eaf0"/><stop offset=".3" stop-color="#f4f7f9"/><stop offset=".7" stop-color="#efedf3"/><stop offset="1" stop-color="#d6dbe5"/></linearGradient>
<pattern id="gz" width="5" height="5" patternUnits="userSpaceOnUse" patternTransform="rotate(-42)"><rect width="5" height="5" fill="#b4d9e7"/><path d="M0 0 H5 M0 0 V5" stroke="#eef6fa" stroke-width="1.6"/></pattern>
<pattern id="bands" width="10" height="9" patternUnits="userSpaceOnUse"><rect width="10" height="9" fill="none"/><rect y="0" width="10" height="3" fill="#e6e3ec" opacity=".55"/></pattern>
</defs>
<!-- gauze strip under/left of roll -->
<g filter="url(#b05)" opacity=".9"><path d="M0 96 L22 88 L110 200 L100 232 L72 230 L0 172 Z" fill="url(#gz)"/></g>
<!-- roll shadow + roll -->
<g transform="translate(69.5,133) rotate(-42.4)">
<rect x="-34" y="-74" width="76" height="156" rx="14" fill="#4a9cc0" opacity=".45" filter="url(#b4)"/>
<rect x="-37.5" y="-77.5" width="70" height="155" rx="12" fill="url(#tube)" filter="url(#b1)"/>
<rect x="-37.5" y="-66" width="70" height="136" fill="url(#bands)" opacity=".5" filter="url(#b1)"/>
<path d="M32 -66 V70" stroke="#f3dfe4" stroke-width="2" stroke-dasharray="2 3" opacity=".7"/>
</g>
<!-- forceps / instruments -->
<g fill="none" stroke-linecap="round" filter="url(#b1)">
<path d="M0 334 C40 308,85 276,128 247" stroke="#ddd7e4" stroke-width="6" opacity=".85"/>
<path d="M0 324 C40 298,80 270,120 242" stroke="#9fb6c8" stroke-width="1.6" opacity=".8"/>
<path d="M0 306 C30 285,70 255,96 232" stroke="#cfe3ec" stroke-width="5" opacity=".6"/>
<path d="M62 328 C92 300,128 268,162 241" stroke="#e5deea" stroke-width="5" opacity=".85"/>
<path d="M70 330 C98 304,132 274,166 247" stroke="#5fb0cc" stroke-width="3" opacity=".6"/>
<path d="M162 241 C176 234,200 240,226 246 C236 249,240 256,238 264" stroke="#e9f1f5" stroke-width="4" opacity=".9"/>
<path d="M170 249 C186 246,206 250,222 255" stroke="#7f98ac" stroke-width="1.3" opacity=".6"/>
<path d="M158 229 Q172 237 192 238" stroke="#34465a" stroke-width="3.5" opacity=".65"/>
<path d="M104 228 C120 222,138 224,150 232" stroke="#59aecb" stroke-width="10" opacity=".5"/>
</g>
<!-- syringe teal -->
<g filter="url(#b05)"><path d="M87 389 L97.5 387 L116.5 496.4 L104 496.4 Z" fill="#2db5be" opacity=".8"/>
<path d="M93 392 L110.5 496" stroke="#178a96" stroke-width="3" stroke-dasharray="2.5 3" opacity=".55"/>
<path d="M88.5 392 L105 496" stroke="#9fe6ea" stroke-width="1.5" opacity=".7"/>
<path d="M88 377 L91.5 389" stroke="#d6eef4" stroke-width="1.6" opacity=".8"/></g>
<!-- needle bottom-left -->
<path d="M0 470 L26 440 L34 448 L6 496 L0 496 Z" fill="#c3d3dd" opacity=".45" filter="url(#b2)"/>
<path d="M-2 490 L27 446" stroke="#d9e1e8" stroke-width="7" opacity=".85" filter="url(#b05)"/>
<path d="M2 492 L30 448" stroke="#26343f" stroke-width="1.8" stroke-dasharray="3.5 4" opacity=".8"/>
<path d="M44 387 L58 377" stroke="#d3e3ec" stroke-width="1.5" opacity=".7"/>
<!-- small pills -->
<circle cx="152.9" cy="436.3" r="7.6" fill="#f2f7fa" filter="url(#b05)"/><circle cx="152.9" cy="436.3" r="4" fill="#efe9e2" opacity=".7"/>
<circle cx="2" cy="283" r="7" fill="#eef5f8" filter="url(#b1)"/>
</svg><svg width="663.5" height="496.4" viewBox="0 0 663.5 496.4" style="left:0;top:0"><defs><linearGradient id="egt" x1="0" y1="0" x2="0" y2="1"><stop offset="0" stop-color="#e6eeff"/><stop offset=".5" stop-color="#cddcfc"/><stop offset="1" stop-color="#a6c1f7"/></linearGradient><linearGradient id="pgt" x1="0" y1="0" x2="0" y2="1"><stop offset="0" stop-color="#9068ba"/><stop offset=".35" stop-color="#8258ae"/><stop offset="1" stop-color="#6f4a97"/></linearGradient><filter id="sbt" x="-10%" y="-20%" width="120%" height="140%"><feGaussianBlur stdDeviation="1.2"/></filter></defs><rect x="117.0" y="78.7" width="414.4" height="52.9" fill="#281e46" opacity=".6" filter="url(#sbt)"/><rect x="116.0" y="76.2" width="415.4" height="53.4" fill="url(#pgt)"/><rect x="116.0" y="76.2" width="415.4" height="1.2" fill="#fff" opacity=".28"/><rect x="116.0" y="128.4" width="415.4" height="1.2" fill="#000" opacity=".18"/><rect x="9.70" y="232.60" width="112.10" height="57.60" fill="#4f81bd" stroke="#3d6394" stroke-width="1.8"/><rect x="11.30" y="314.00" width="109.70" height="61.60" fill="#4f81bd" stroke="#3d6394" stroke-width="1.8"/><rect x="10.10" y="398.90" width="108.90" height="46.10" fill="#4f81bd" stroke="#3d6394" stroke-width="1.8"/><rect x="141.40" y="260.30" width="116.80" height="61.50" fill="#4f81bd" stroke="#3d6394" stroke-width="1.8"/><rect x="148.10" y="341.70" width="105.00" height="47.40" fill="#4f81bd" stroke="#3d6394" stroke-width="1.8"/><rect x="291.30" y="235.00" width="97.60" height="46.50" fill="#4f81bd" stroke="#3d6394" stroke-width="1.8"/><rect x="280.20" y="306.90" width="124.90" height="71.10" fill="#4f81bd" stroke="#3d6394" stroke-width="1.8"/><rect x="416.00" y="264.20" width="105.00" height="45.80" fill="#4f81bd" stroke="#3d6394" stroke-width="1.8"/><rect x="421.20" y="341.70" width="93.90" height="42.60" fill="#4f81bd" stroke="#3d6394" stroke-width="1.8"/><rect x="407.30" y="406.00" width="124.80" height="70.90" fill="#4f81bd" stroke="#3d6394" stroke-width="1.8"/><rect x="550.50" y="213.30" width="91.10" height="29.50" fill="#4f81bd" stroke="#3d6394" stroke-width="1.8"/><rect x="547.30" y="261.40" width="103.80" height="46.60" fill="#4f81bd" stroke="#3d6394" stroke-width="1.8"/><rect x="532.30" y="325.90" width="122.80" height="63.20" fill="#4f81bd" stroke="#3d6394" stroke-width="1.8"/><polygon points="55.3,207.1 63.0,207.1 63.0,222.4 66.6,222.4 59.1,228.9 51.7,222.4 55.3,222.4" fill="#4f81bd" stroke="#3d6394" stroke-width="1.4" stroke-linejoin="miter"/><polygon points="197.2,242.4 205.2,242.4 205.2,251.4 209.0,251.4 201.2,258.2 193.4,251.4 197.2,251.4" fill="#4f81bd" stroke="#3d6394" stroke-width="1.4" stroke-linejoin="miter"/><polygon points="336.1,207.1 345.5,207.1 345.5,221.0 350.0,221.0 340.8,228.9 331.6,221.0 336.1,221.0" fill="#4f81bd" stroke="#3d6394" stroke-width="1.4" stroke-linejoin="miter"/><polygon points="463.8,237.6 471.6,237.6 471.6,251.6 475.3,251.6 467.7,258.2 460.1,251.6 463.8,251.6" fill="#4f81bd" stroke="#3d6394" stroke-width="1.4" stroke-linejoin="miter"/><polygon points="596.6,198.0 602.9,198.0 602.9,208.5 605.8,208.5 599.8,213.9 593.7,208.5 596.6,208.5" fill="#4f81bd" stroke="#3d6394" stroke-width="1.4" stroke-linejoin="miter"/><polygon points="55.3,291.7 63.0,291.7 63.0,306.9 66.6,306.9 59.1,313.4 51.7,306.9 55.3,306.9" fill="#4f81bd" stroke="#3d6394" stroke-width="1.4" stroke-linejoin="miter"/><polygon points="55.3,377.1 63.0,377.1 63.0,391.9 66.6,391.9 59.1,398.4 51.7,391.9 55.3,391.9" fill="#4f81bd" stroke="#3d6394" stroke-width="1.4" stroke-linejoin="miter"/><polygon points="197.0,325.3 208.1,325.3 208.1,333.4 213.7,333.4 202.6,341.5 191.4,333.4 197.0,333.4" fill="#4f81bd" stroke="#3d6394" stroke-width="1.4" stroke-linejoin="miter"/><polygon points="334.9,285.0 344.3,285.0 344.3,298.8 348.8,298.8 339.6,306.7 330.4,298.8 334.9,298.8" fill="#4f81bd" stroke="#3d6394" stroke-width="1.4" stroke-linejoin="miter"/><polygon points="464.9,312.7 474.5,312.7 474.5,333.3 479.3,333.3 469.7,341.5 460.1,333.3 464.9,333.3" fill="#4f81bd" stroke="#3d6394" stroke-width="1.4" stroke-linejoin="miter"/><polygon points="466.1,385.0 474.1,385.0 474.1,399.6 477.9,399.6 470.1,406.4 462.3,399.6 466.1,399.6" fill="#4f81bd" stroke="#3d6394" stroke-width="1.4" stroke-linejoin="miter"/><polygon points="594.4,306.7 602.1,306.7 602.1,319.9 605.8,319.9 598.2,326.5 590.7,319.9 594.4,319.9" fill="#4f81bd" stroke="#3d6394" stroke-width="1.4" stroke-linejoin="miter"/><polygon points="596.6,243.4 602.9,243.4 602.9,257.0 605.8,257.0 599.8,262.4 593.7,257.0 596.6,257.0" fill="#4f81bd" stroke="#3d6394" stroke-width="1.4" stroke-linejoin="miter"/><ellipse cx="64.35" cy="174.25" rx="59.35" ry="31.55" fill="#1e3c78" opacity=".35" filter="url(#sbt)"/><ellipse cx="64.35" cy="173.05" rx="58.85" ry="31.05" fill="url(#egt)" stroke="#4a78c4" stroke-width="1.1"/><ellipse cx="201.00" cy="202.30" rx="71.40" ry="35.10" fill="#1e3c78" opacity=".35" filter="url(#sbt)"/><ellipse cx="201.00" cy="201.10" rx="70.90" ry="34.60" fill="url(#egt)" stroke="#4a78c4" stroke-width="1.1"/><ellipse cx="342.05" cy="175.25" rx="65.35" ry="32.55" fill="#1e3c78" opacity=".35" filter="url(#sbt)"/><ellipse cx="342.05" cy="174.05" rx="64.85" ry="32.05" fill="url(#egt)" stroke="#4a78c4" stroke-width="1.1"/><ellipse cx="466.90" cy="194.80" rx="62.70" ry="41.40" fill="#1e3c78" opacity=".35" filter="url(#sbt)"/><ellipse cx="466.90" cy="193.60" rx="62.20" ry="40.90" fill="url(#egt)" stroke="#4a78c4" stroke-width="1.1"/><ellipse cx="596.10" cy="163.75" rx="62.10" ry="31.35" fill="#1e3c78" opacity=".35" filter="url(#sbt)"/><ellipse cx="596.10" cy="162.55" rx="61.60" ry="30.85" fill="url(#egt)" stroke="#4a78c4" stroke-width="1.1"/></svg><span class="tx" style="left:337.4px;top:16.6px;font:bold 21.5px/1 'Liberation Serif',serif;color:#000;letter-spacing:0.289px">ГЛАВА I. ТЕОРЕТИЧЕСКИЕ ОСНОВЫ ИЗУЧЕНИЯ</span><span class="tx" style="left:337.7px;top:43.5px;font:bold 21.5px/1 'Liberation Serif',serif;color:#000;letter-spacing:0.334px">ЖЕЛУДОЧНО-КИШЕЧНЫХ  КРОВОТЕЧЕНИЙ</span><span class="tx" style="left:324.2px;top:95.7px;font:15px/1 'Liberation Sans',sans-serif;color:#fff;letter-spacing:0.212px">Причины желудочно- кишечных кровотечений</span><span class="tx" style="left:65.5px;top:233.8px;font:15.1px/1 'Liberation Sans',sans-serif;color:#fff;letter-spacing:0.000px">Варикозное</span><span class="tx" style="left:65.5px;top:253.5px;font:15.1px/1 'Liberation Sans',sans-serif;color:#fff;letter-spacing:0.000px">расширение</span><span class="tx" style="left:65.5px;top:273.6px;font:15.1px/1 'Liberation Sans',sans-serif;color:#fff;letter-spacing:0.000px">вен</span><span class="tx" style="left:66.0px;top:316.7px;font:15.1px/1 'Liberation Sans',sans-serif;color:#fff;letter-spacing:0.000px">Синдром</span><span class="tx" style="left:66.0px;top:336.5px;font:15.1px/1 'Liberation Sans',sans-serif;color:#fff;letter-spacing:0.000px">Мэллори-</span><span class="tx" style="left:66.0px;top:356.4px;font:15.1px/1 'Liberation Sans',sans-serif;color:#fff;letter-spacing:0.000px">Вейсса</span><span class="tx" style="left:64.4px;top:413.6px;font:15.1px/1 'Liberation Sans',sans-serif;color:#fff;letter-spacing:0.000px">Опухоли</span><span class="tx" style="left:199.6px;top:282.3px;font:15.1px/1 'Liberation Sans',sans-serif;color:#fff;letter-spacing:0.000px">Язвы и эрозии</span><span class="tx" style="left:200.4px;top:357.4px;font:15.1px/1 'Liberation Sans',sans-serif;color:#fff;letter-spacing:0.000px">Опухоли</span><span class="tx" style="left:339.9px;top:249.8px;font:15.1px/1 'Liberation Sans',sans-serif;color:#fff;letter-spacing:0.000px">Опухоли</span><span class="tx" style="left:342.5px;top:324.6px;font:15.1px/1 'Liberation Sans',sans-serif;color:#fff;letter-spacing:0.000px">Инфекционные</span><span class="tx" style="left:342.5px;top:344.4px;font:15.1px/1 'Liberation Sans',sans-serif;color:#fff;letter-spacing:0.000px">болезни</span><span class="tx" style="left:468.3px;top:278.3px;font:15.1px/1 'Liberation Sans',sans-serif;color:#fff;letter-spacing:0.000px">Опухоли</span><span class="tx" style="left:468.0px;top:354.7px;font:15.1px/1 'Liberation Sans',sans-serif;color:#fff;letter-spacing:0.000px">Колиты</span><span class="tx" style="left:469.5px;top:423.6px;font:15.1px/1 'Liberation Sans',sans-serif;color:#fff;letter-spacing:0.000px">Инфекционные</span><span class="tx" style="left:469.5px;top:443.7px;font:15.1px/1 'Liberation Sans',sans-serif;color:#fff;letter-spacing:0.000px">болезни</span><span class="tx" style="left:595.8px;top:219.8px;font:15.1px/1 'Liberation Sans',sans-serif;color:#fff;letter-spacing:0.000px">Геморрой</span><span class="tx" style="left:599.0px;top:276.8px;font:15.1px/1 'Liberation Sans',sans-serif;color:#fff;letter-spacing:0.000px">Опухоли</span><span class="tx" style="left:593.5px;top:339.6px;font:15.1px/1 'Liberation Sans',sans-serif;color:#fff;letter-spacing:0.000px">Инфекционные</span><span class="tx" style="left:593.5px;top:359.4px;font:15.1px/1 'Liberation Sans',sans-serif;color:#fff;letter-spacing:0.000px">болезни</span><span class="tx" style="left:64.1px;top:164.9px;font:bold 15.6px/1 'Liberation Sans',sans-serif;color:#000;letter-spacing:-0.572px">пищевод</span><span class="tx" style="left:200.7px;top:173.9px;font:bold 15.6px/1 'Liberation Sans',sans-serif;color:#000;letter-spacing:-0.525px">Желудок и</span><span class="tx" style="left:200.8px;top:193.7px;font:bold 15.6px/1 'Liberation Sans',sans-serif;color:#000;letter-spacing:-0.487px">12 перстная</span><span class="tx" style="left:200.7px;top:213.5px;font:bold 15.6px/1 'Liberation Sans',sans-serif;color:#000;letter-spacing:-0.541px">кишка</span><span class="tx" style="left:341.8px;top:155.7px;font:bold 15.6px/1 'Liberation Sans',sans-serif;color:#000;letter-spacing:-0.524px">Тонкий</span><span class="tx" style="left:341.8px;top:175.5px;font:bold 15.6px/1 'Liberation Sans',sans-serif;color:#000;letter-spacing:-0.538px">кишечник</span><span class="tx" style="left:466.6px;top:174.7px;font:bold 15.6px/1 'Liberation Sans',sans-serif;color:#000;letter-spacing:-0.549px">Толстый</span><span class="tx" style="left:466.6px;top:194.5px;font:bold 15.6px/1 'Liberation Sans',sans-serif;color:#000;letter-spacing:-0.538px">кишечник</span><span class="tx" style="left:595.8px;top:145.1px;font:bold 15.6px/1 'Liberation Sans',sans-serif;color:#000;letter-spacing:-0.565px">Прямая</span><span class="tx" style="left:595.8px;top:164.9px;font:bold 15.6px/1 'Liberation Sans',sans-serif;color:#000;letter-spacing:-0.541px">кишка</span></div></div>
<div class="a" style="left:24.4px;top:405.8px;width:149.3px;height:112.7px;overflow:hidden;background:#fff;border:1px solid #c4c4c4"></div><svg style="left:24.4px;top:405.8px;overflow:hidden" width="149.3" height="112.7" viewBox="25 30 837 632"><defs><linearGradient id="g6" x1="0" y1="0" x2="0" y2="1"><stop offset="0" stop-color="#d9e9b8"/><stop offset=".5" stop-color="#c6dd9a"/><stop offset="1" stop-color="#d3e5ae"/></linearGradient><filter id="b6" x="-10%" y="-10%" width="120%" height="120%"><feGaussianBlur stdDeviation="2"/></filter></defs><rect x="35" y="38" width="820" height="617" fill="#fbf3ea"/><polygon points="35,38 150,38 135,52 45,52 45,645 505,645 520,655 35,655" fill="#4fb0d6"/><rect x="45" y="52" width="800" height="593" fill="#fff"/><path d="M478 70 L522 70 L524 150 C526 175,545 180,575 178 C625 178,645 215,640 275 C636 350,585 420,505 432 C440 440,390 420,372 392 C355 378,335 388,322 405 C308 430,322 470,360 490 C410 510,470 470,520 470 C545 472,560 495,568 518 L470 520 C440 545,380 555,335 535 C285 512,262 450,275 395 C285 345,330 318,365 318 C400 300,440 290,458 262 C478 235,480 200,480 150 Z" fill="none" stroke="#dfe8d2" stroke-width="16" stroke-linejoin="round" filter="url(#b6)"/><path d="M478 70 L522 70 L524 150 C526 175,545 180,575 178 C625 178,645 215,640 275 C636 350,585 420,505 432 C440 440,390 420,372 392 C355 378,335 388,322 405 C308 430,322 470,360 490 C410 510,470 470,520 470 C545 472,560 495,568 518 L470 520 C440 545,380 555,335 535 C285 512,262 450,275 395 C285 345,330 318,365 318 C400 300,440 290,458 262 C478 235,480 200,480 150 Z" fill="#d0e4ad" stroke="#fff" stroke-width="3"/><path d="M480 72 q-8 12 0 22 q8 10 0 22 q-8 10 2 22 M520 72 q8 12 0 22 q-8 10 0 22 q8 10 -2 22" fill="none" stroke="#6a8a3a" stroke-width="5"/><circle cx="572" cy="312" r="14" fill="#e9efd8" stroke="#7c8c5c" stroke-width="3"/><circle cx="326" cy="345" r="9" fill="#fff" stroke="#7c8c5c" stroke-width="2"/><circle cx="450" cy="502" r="8" fill="#fff" stroke="#7c8c5c" stroke-width="2"/><path d="M428 286 l22 -10 M525 185 l8 40 M410 372 l10 8 l8 -10 l10 12 l8 -10 M420 390 l12 6 M296 455 l8 14" stroke="#5a7a2a" stroke-width="5" fill="none"/><g fill="none" stroke="#666" stroke-width="2" opacity=".8"><path d="M230 122 L420 122 L478 186"/><path d="M230 266 L415 266 L440 282"/><path d="M292 266 L326 340"/><path d="M230 395 L360 395 L436 325"/><path d="M270 395 L298 462"/><path d="M230 523 L430 523 L448 506"/><path d="M662 140 L535 140"/><path d="M662 300 L590 222 L535 222"/><path d="M662 420 L586 335"/><path d="M662 530 L520 376 L452 376"/></g><rect x="53" y="65" width="177" height="120" fill="url(#g6)" stroke="#e6f0d0" stroke-width="3"/><text x="82" y="88" font-size="17" font-family="'Liberation Serif',serif" fill="#3c4a2a" opacity=".85" textLength="118" lengthAdjust="spacingAndGlyphs">Эзофагит (10%)</text><text x="88" y="110" font-size="17" font-family="'Liberation Serif',serif" fill="#3c4a2a" opacity=".85" textLength="110" lengthAdjust="spacingAndGlyphs">обычно вместе</text><text x="98" y="131" font-size="17" font-family="'Liberation Serif',serif" fill="#3c4a2a" opacity=".85" textLength="92" lengthAdjust="spacingAndGlyphs">с грыжей</text><text x="84" y="152" font-size="17" font-family="'Liberation Serif',serif" fill="#3c4a2a" opacity=".85" textLength="114" lengthAdjust="spacingAndGlyphs">пищеводного</text><text x="100" y="173" font-size="17" font-family="'Liberation Serif',serif" fill="#3c4a2a" opacity=".85" textLength="85" lengthAdjust="spacingAndGlyphs">отверстия</text><rect x="53" y="200" width="177" height="135" fill="url(#g6)" stroke="#e6f0d0" stroke-width="3"/><text x="62" y="226" font-size="17" font-family="'Liberation Serif',serif" fill="#3c4a2a" opacity=".85" textLength="160" lengthAdjust="spacingAndGlyphs">НПВП* Helicobacter</text><text x="150" y="248" font-size="17" font-family="'Liberation Serif',serif" fill="#3c4a2a" opacity=".85" textLength="45" lengthAdjust="spacingAndGlyphs">pylori</text><text x="70" y="300" font-size="17" font-family="'Liberation Serif',serif" fill="#3c4a2a" opacity=".85" textLength="145" lengthAdjust="spacingAndGlyphs">Пептическая язва</text><text x="100" y="322" font-size="17" font-family="'Liberation Serif',serif" fill="#3c4a2a" opacity=".85" textLength="82" lengthAdjust="spacingAndGlyphs">(35–50%)</text><rect x="53" y="352" width="177" height="86" fill="url(#g6)" stroke="#e6f0d0" stroke-width="3"/><text x="90" y="380" font-size="17" font-family="'Liberation Serif',serif" fill="#3c4a2a" opacity=".85" textLength="106" lengthAdjust="spacingAndGlyphs">Сосудистая</text><text x="80" y="402" font-size="17" font-family="'Liberation Serif',serif" fill="#3c4a2a" opacity=".85" textLength="126" lengthAdjust="spacingAndGlyphs">мальформация</text><text x="122" y="424" font-size="17" font-family="'Liberation Serif',serif" fill="#3c4a2a" opacity=".85" textLength="40" lengthAdjust="spacingAndGlyphs">(5%)</text><rect x="53" y="458" width="177" height="137" fill="url(#g6)" stroke="#e6f0d0" stroke-width="3"/><text x="95" y="482" font-size="17" font-family="'Liberation Serif',serif" fill="#3c4a2a" opacity=".85" textLength="100" lengthAdjust="spacingAndGlyphs">Атриальный</text><text x="92" y="503" font-size="17" font-family="'Liberation Serif',serif" fill="#3c4a2a" opacity=".85" textLength="106" lengthAdjust="spacingAndGlyphs">трансплантат</text><text x="60" y="562" font-size="17" font-family="'Liberation Serif',serif" fill="#3c4a2a" opacity=".85" textLength="164" lengthAdjust="spacingAndGlyphs">Аортодуоденальный</text><text x="90" y="584" font-size="17" font-family="'Liberation Serif',serif" fill="#3c4a2a" opacity=".85" textLength="102" lengthAdjust="spacingAndGlyphs">свищ (0,2%)</text><rect x="662" y="62" width="173" height="160" fill="url(#g6)" stroke="#e6f0d0" stroke-width="3"/><text x="668" y="86" font-size="17" font-family="'Liberation Serif',serif" fill="#3c4a2a" opacity=".85" textLength="50" lengthAdjust="spacingAndGlyphs">Болезни</text><text x="752" y="86" font-size="17" font-family="'Liberation Serif',serif" fill="#3c4a2a" opacity=".85" textLength="78" lengthAdjust="spacingAndGlyphs">Тромбоз</text><text x="672" y="106" font-size="17" font-family="'Liberation Serif',serif" fill="#3c4a2a" opacity=".85" textLength="44" lengthAdjust="spacingAndGlyphs">печени</text><text x="740" y="106" font-size="17" font-family="'Liberation Serif',serif" fill="#3c4a2a" opacity=".85" textLength="92" lengthAdjust="spacingAndGlyphs">портальной</text><text x="772" y="126" font-size="17" font-family="'Liberation Serif',serif" fill="#3c4a2a" opacity=".85" textLength="28" lengthAdjust="spacingAndGlyphs">вены</text><text x="676" y="192" font-size="17" font-family="'Liberation Serif',serif" fill="#3c4a2a" opacity=".85" textLength="148" lengthAdjust="spacingAndGlyphs">Варикозные узлы</text><text x="722" y="214" font-size="17" font-family="'Liberation Serif',serif" fill="#3c4a2a" opacity=".85" textLength="56" lengthAdjust="spacingAndGlyphs">(2–9%)</text><rect x="662" y="240" width="173" height="120" fill="url(#g6)" stroke="#e6f0d0" stroke-width="3"/><text x="724" y="266" font-size="17" font-family="'Liberation Serif',serif" fill="#3c4a2a" opacity=".85" textLength="48" lengthAdjust="spacingAndGlyphs">Рвота</text><text x="668" y="330" font-size="17" font-family="'Liberation Serif',serif" fill="#3c4a2a" opacity=".85" textLength="164" lengthAdjust="spacingAndGlyphs">Синдром Мэллори –</text><text x="702" y="352" font-size="17" font-family="'Liberation Serif',serif" fill="#3c4a2a" opacity=".85" textLength="94" lengthAdjust="spacingAndGlyphs">Вейсса (5%)</text><rect x="662" y="378" width="173" height="80" fill="url(#g6)" stroke="#e6f0d0" stroke-width="3"/><text x="700" y="414" font-size="17" font-family="'Liberation Serif',serif" fill="#3c4a2a" opacity=".85" textLength="98" lengthAdjust="spacingAndGlyphs">Рак желудка</text><text x="672" y="436" font-size="17" font-family="'Liberation Serif',serif" fill="#3c4a2a" opacity=".85" textLength="154" lengthAdjust="spacingAndGlyphs">или пищевода (5%)</text><rect x="662" y="472" width="173" height="123" fill="url(#g6)" stroke="#e6f0d0" stroke-width="3"/><text x="668" y="498" font-size="17" font-family="'Liberation Serif',serif" fill="#3c4a2a" opacity=".85" textLength="54" lengthAdjust="spacingAndGlyphs">НПВП*</text><text x="756" y="498" font-size="17" font-family="'Liberation Serif',serif" fill="#3c4a2a" opacity=".85" textLength="70" lengthAdjust="spacingAndGlyphs">Алкоголь</text><text x="684" y="562" font-size="17" font-family="'Liberation Serif',serif" fill="#3c4a2a" opacity=".85" textLength="128" lengthAdjust="spacingAndGlyphs">Эрозии желудка</text><text x="712" y="584" font-size="17" font-family="'Liberation Serif',serif" fill="#3c4a2a" opacity=".85" textLength="74" lengthAdjust="spacingAndGlyphs">(10–20%)</text><g stroke="#333" stroke-width="2" fill="none" opacity=".8"><path d="M92 232 L128 285 M185 255 L152 285 M142 512 L142 545 M700 112 L742 172 M786 132 L760 172 M748 276 L748 312 M700 506 L742 546 M796 506 L760 546"/></g><text x="58" y="633" font-size="16" font-family="'Liberation Serif',serif" fill="#444" textLength="422" lengthAdjust="spacingAndGlyphs">*НПВП – нестероидные противовоспалительные препараты</text></svg>
<div class="a" style="left:24.4px;top:537.6px;width:149.3px;height:112.7px;overflow:hidden;background:#fff;border:1px solid #c4c4c4"></div><svg style="left:24.4px;top:537.6px;overflow:hidden" width="149.3" height="112.7" viewBox="25 30 837 632"><defs><linearGradient id="g7" x1="0" y1="0" x2="1" y2="0"><stop offset="0" stop-color="#7cc4de"/><stop offset="1" stop-color="#a2d7e8"/></linearGradient><filter id="b7" x="-10%" y="-10%" width="120%" height="120%"><feGaussianBlur stdDeviation="3"/></filter><radialGradient id="r7"><stop offset="0" stop-color="#e8614a"/><stop offset=".55" stop-color="#8c2a20"/><stop offset="1" stop-color="#3a1512"/></radialGradient></defs><rect x="35" y="38" width="820" height="617" fill="url(#g7)"/><g filter="url(#b7)"><g transform="translate(120,190) rotate(-34)"><rect x="-55" y="-85" width="110" height="190" rx="25" fill="#f1f7fa"/></g><path d="M35 250 C120 290,220 250,300 300 C340 330,330 360,290 350" fill="none" stroke="#d5e6ee" stroke-width="9"/><path d="M110 420 C180 380,260 330,330 340" fill="none" stroke="#c6dbe6" stroke-width="8"/><path d="M35 640 L90 545" stroke="#8e9aa6" stroke-width="12"/><path d="M140 530 L165 655" stroke="#35b4bc" stroke-width="16"/><circle cx="215" cy="580" r="9" fill="#f5f9fb"/><circle cx="228" cy="490" r="8" fill="#f0f6f9"/></g><text x="66" y="95" font-size="29" font-weight="bold" font-family="'Liberation Serif',serif" fill="#000" textLength="772" lengthAdjust="spacingAndGlyphs">Классификация желудочно -кишечных кровотечений</text><g stroke="#3f6fc0" stroke-width="4" fill="none"><path d="M268 207 L190 232"/><path d="M350 207 L400 237"/><path d="M128 273 L108 298"/><path d="M195 273 L215 298"/><path d="M232 328 L234 355"/><path d="M108 328 L108 418"/><path d="M380 278 L300 395"/><path d="M420 278 L420 490"/><path d="M450 278 L492 328"/></g><rect x="190" y="135" width="248" height="72" fill="#f28c38" stroke="#c96a1c" stroke-width="3"/><text x="215" y="166" font-size="16" font-weight="bold" font-family="'Liberation Serif',serif" fill="#fff" opacity=".9" textLength="217" lengthAdjust="spacingAndGlyphs">Желудочно-кишечные</text><text x="225" y="190" font-size="16" font-weight="bold" font-family="'Liberation Serif',serif" fill="#fff" opacity=".9" textLength="175" lengthAdjust="spacingAndGlyphs">кровотечения (ЖКК)</text><rect x="85" y="232" width="143" height="41" fill="#8aad4a" stroke="#6a8a34" stroke-width="3"/><text x="120" y="258" font-size="16" font-weight="bold" font-family="'Liberation Serif',serif" fill="#fff" opacity=".9" textLength="70" lengthAdjust="spacingAndGlyphs">ОСТРЫЕ</text><rect x="360" y="237" width="150" height="41" fill="#7051a0" stroke="#54397e" stroke-width="3"/><text x="368" y="264" font-size="16" font-weight="bold" font-family="'Liberation Serif',serif" fill="#fff" opacity=".9" textLength="132" lengthAdjust="spacingAndGlyphs">ХРОНИЧЕСКИЕ</text><rect x="40" y="298" width="120" height="30" fill="#8db14e" stroke="#fff" stroke-width="4"/><text x="52" y="319" font-size="14" font-weight="bold" font-family="'Liberation Serif',serif" fill="#fff" opacity=".9" textLength="96" lengthAdjust="spacingAndGlyphs">профузные</text><rect x="175" y="298" width="120" height="30" fill="#8db14e" stroke="#fff" stroke-width="4"/><text x="206" y="319" font-size="14" font-weight="bold" font-family="'Liberation Serif',serif" fill="#fff" opacity=".9" textLength="60" lengthAdjust="spacingAndGlyphs">малые</text><rect x="192" y="355" width="86" height="30" fill="#8db14e" stroke="#fff" stroke-width="4"/><text x="202" y="376" font-size="14" font-weight="bold" font-family="'Liberation Serif',serif" fill="#fff" opacity=".9" textLength="66" lengthAdjust="spacingAndGlyphs">скрытые</text><rect x="42" y="418" width="178" height="77" fill="#8db14e" stroke="#fff" stroke-width="4"/><text x="55" y="452" font-size="15" font-weight="bold" font-family="'Liberation Serif',serif" fill="#fff" opacity=".9" textLength="153" lengthAdjust="spacingAndGlyphs">геморрагический</text><text x="92" y="474" font-size="15" font-weight="bold" font-family="'Liberation Serif',serif" fill="#fff" opacity=".9" textLength="78" lengthAdjust="spacingAndGlyphs">синдром</text><rect x="248" y="395" width="147" height="73" fill="#7051a0" stroke="#fff" stroke-width="4"/><text x="278" y="418" font-size="14" font-weight="bold" font-family="'Liberation Serif',serif" fill="#fff" opacity=".9" textLength="90" lengthAdjust="spacingAndGlyphs">выражена</text><text x="286" y="440" font-size="14" font-weight="bold" font-family="'Liberation Serif',serif" fill="#fff" opacity=".9" textLength="72" lengthAdjust="spacingAndGlyphs">анемия</text><text x="280" y="462" font-size="14" font-weight="bold" font-family="'Liberation Serif',serif" fill="#fff" opacity=".9" textLength="92" lengthAdjust="spacingAndGlyphs">Hb≤100 г/л</text><rect x="440" y="328" width="135" height="107" fill="#7051a0" stroke="#fff" stroke-width="4"/><text x="456" y="354" font-size="14" font-weight="bold" font-family="'Liberation Serif',serif" fill="#fff" opacity=".9" textLength="100" lengthAdjust="spacingAndGlyphs">умеренная</text><text x="470" y="376" font-size="14" font-weight="bold" font-family="'Liberation Serif',serif" fill="#fff" opacity=".9" textLength="72" lengthAdjust="spacingAndGlyphs">анемия</text><text x="452" y="400" font-size="14" font-weight="bold" font-family="'Liberation Serif',serif" fill="#fff" opacity=".9" textLength="110" lengthAdjust="spacingAndGlyphs">130&lt;Hb&lt;100</text><text x="494" y="424" font-size="14" font-weight="bold" font-family="'Liberation Serif',serif" fill="#fff" opacity=".9" textLength="26" lengthAdjust="spacingAndGlyphs">г/л</text><rect x="322" y="490" width="208" height="140" fill="#7051a0" stroke="#fff" stroke-width="4"/><text x="372" y="520" font-size="14" font-weight="bold" font-family="'Liberation Serif',serif" fill="#fff" opacity=".9" textLength="106" lengthAdjust="spacingAndGlyphs">Без анемии</text><text x="352" y="546" font-size="14" font-weight="bold" font-family="'Liberation Serif',serif" fill="#fff" opacity=".9" textLength="148" lengthAdjust="spacingAndGlyphs">(положительная</text><text x="336" y="572" font-size="14" font-weight="bold" font-family="'Liberation Serif',serif" fill="#fff" opacity=".9" textLength="184" lengthAdjust="spacingAndGlyphs">генетическая реакция</text><text x="344" y="596" font-size="14" font-weight="bold" font-family="'Liberation Serif',serif" fill="#fff" opacity=".9" textLength="168" lengthAdjust="spacingAndGlyphs">на наличие крови в</text><text x="400" y="620" font-size="14" font-weight="bold" font-family="'Liberation Serif',serif" fill="#fff" opacity=".9" textLength="52" lengthAdjust="spacingAndGlyphs">кале)</text><rect x="585" y="118" width="250" height="280" fill="#fff"/><g filter="url(#b7)"><path d="M640 150 q25 10 18 40 q35 0 30 50 q5 60 -10 80 q-30 20 -60 -5 q-30 -40 -15 -100 q15 -30 37 -25 Z" fill="#e89a82"/><path d="M632 300 q12 30 5 80" stroke="#e08a72" stroke-width="14" fill="none"/><path d="M625 195 q20 -20 45 0" stroke="#c8523c" stroke-width="8" fill="none"/></g><ellipse cx="762" cy="158" rx="52" ry="40" fill="url(#r7)"/><ellipse cx="778" cy="255" rx="52" ry="42" fill="url(#r7)"/><ellipse cx="762" cy="355" rx="52" ry="40" fill="url(#r7)"/><rect x="585" y="443" width="250" height="202" fill="#dff0f8"/><g filter="url(#b7)"><path d="M715 645 L715 560 q10 -50 60 -60 q50 0 60 50 L835 645 Z" fill="#8fb6dc"/><ellipse cx="752" cy="490" rx="34" ry="44" fill="#d9a88c"/><path d="M720 470 q30 -45 70 -5 l-5 -20 q-35 -25 -65 5 Z" fill="#7a7a80"/><path d="M590 600 q-5 -60 50 -75 q40 -50 75 -30 q20 40 -15 100 q-30 40 -70 40 q-35 -5 -40 -35 Z" fill="#a85a32"/><path d="M640 540 q40 -30 60 10 q-5 50 -40 70 q-30 -20 -20 -80 Z" fill="#e8b890"/><circle cx="632" cy="565" r="22" fill="none" stroke="#d02020" stroke-width="5"/><path d="M740 610 q30 10 70 -5 l5 30 l-80 5 Z" fill="#c99a80"/></g></svg>
<div class="a" style="left:24.4px;top:669.8px;width:149.3px;height:8px;overflow:hidden;background:#fff;border:1px solid #c4c4c4"></div><svg style="left:24.4px;top:669.8px;overflow:hidden" width="149.3" height="8" viewBox="25 30 837 44.8"><rect x="35" y="38" width="820" height="617" fill="#f8efe6"/><polygon points="35,38 215,38 190,70 35,70" fill="#7cc4de"/><text x="110" y="76" font-size="26" font-weight="bold" font-family="'Liberation Serif',serif" fill="#111" textLength="740" lengthAdjust="spacingAndGlyphs">Клинические проявления кровотечений из ЖКТ</text></svg>
<div class="slide" style="left:449px;top:133px"><div class="a" style="left:0;top:0;width:663.5px;height:496px;background:
radial-gradient(ellipse 200px 170px at 90px 300px,rgba(112,192,220,.7),rgba(112,192,220,0) 100%),
radial-gradient(ellipse 190px 200px at 80px 150px,rgba(92,180,212,.7),rgba(92,180,212,0) 100%),
linear-gradient(90deg,#86cbe1 0%,#90d0e4 25%,#9bd4e7 50%,#a5d8ea 100%)"></div>
<svg width="663.5" height="496" viewBox="0 0 663.5 496" style="left:0;top:0">
<defs><filter id="b2" x="-20%" y="-20%" width="140%" height="140%"><feGaussianBlur stdDeviation="2"/></filter>
<filter id="b1" x="-20%" y="-20%" width="140%" height="140%"><feGaussianBlur stdDeviation="1"/></filter>
<filter id="b05" x="-20%" y="-20%" width="140%" height="140%"><feGaussianBlur stdDeviation=".6"/></filter>
<filter id="b4" x="-20%" y="-20%" width="140%" height="140%"><feGaussianBlur stdDeviation="4"/></filter>
<linearGradient id="tube" x1="0" x2="1" y1="0" y2="0"><stop offset="0" stop-color="#e2eaf0"/><stop offset=".3" stop-color="#f4f7f9"/><stop offset=".7" stop-color="#efedf3"/><stop offset="1" stop-color="#d6dbe5"/></linearGradient>
<pattern id="gz" width="5" height="5" patternUnits="userSpaceOnUse" patternTransform="rotate(-42)"><rect width="5" height="5" fill="#b4d9e7"/><path d="M0 0 H5 M0 0 V5" stroke="#eef6fa" stroke-width="1.6"/></pattern>
<pattern id="bands" width="10" height="9" patternUnits="userSpaceOnUse"><rect width="10" height="9" fill="none"/><rect y="0" width="10" height="3" fill="#e6e3ec" opacity=".55"/></pattern>
</defs>
<!-- gauze strip under/left of roll -->
<g filter="url(#b05)" opacity=".9"><path d="M0 96 L22 88 L110 200 L100 232 L72 230 L0 172 Z" fill="url(#gz)"/></g>
<!-- roll shadow + roll -->
<g transform="translate(69.5,133) rotate(-42.4)">
<rect x="-34" y="-74" width="76" height="156" rx="14" fill="#4a9cc0" opacity=".45" filter="url(#b4)"/>
<rect x="-37.5" y="-77.5" width="70" height="155" rx="12" fill="url(#tube)" filter="url(#b1)"/>
<rect x="-37.5" y="-66" width="70" height="136" fill="url(#bands)" opacity=".5" filter="url(#b1)"/>
<path d="M32 -66 V70" stroke="#f3dfe4" stroke-width="2" stroke-dasharray="2 3" opacity=".7"/>
</g>
<!-- forceps / instruments -->
<g fill="none" stroke-linecap="round" filter="url(#b1)">
<path d="M0 334 C40 308,85 276,128 247" stroke="#ddd7e4" stroke-width="6" opacity=".85"/>
<path d="M0 324 C40 298,80 270,120 242" stroke="#9fb6c8" stroke-width="1.6" opacity=".8"/>
<path d="M0 306 C30 285,70 255,96 232" stroke="#cfe3ec" stroke-width="5" opacity=".6"/>
<path d="M62 328 C92 300,128 268,162 241" stroke="#e5deea" stroke-width="5" opacity=".85"/>
<path d="M70 330 C98 304,132 274,166 247" stroke="#5fb0cc" stroke-width="3" opacity=".6"/>
<path d="M162 241 C176 234,200 240,226 246 C236 249,240 256,238 264" stroke="#e9f1f5" stroke-width="4" opacity=".9"/>
<path d="M170 249 C186 246,206 250,222 255" stroke="#7f98ac" stroke-width="1.3" opacity=".6"/>
<path d="M158 229 Q172 237 192 238" stroke="#34465a" stroke-width="3.5" opacity=".65"/>
<path d="M104 228 C120 222,138 224,150 232" stroke="#59aecb" stroke-width="10" opacity=".5"/>
</g>
<!-- syringe teal -->
<g filter="url(#b05)"><path d="M87 389 L97.5 387 L116.5 496.4 L104 496.4 Z" fill="#2db5be" opacity=".8"/>
<path d="M93 392 L110.5 496" stroke="#178a96" stroke-width="3" stroke-dasharray="2.5 3" opacity=".55"/>
<path d="M88.5 392 L105 496" stroke="#9fe6ea" stroke-width="1.5" opacity=".7"/>
<path d="M88 377 L91.5 389" stroke="#d6eef4" stroke-width="1.6" opacity=".8"/></g>
<!-- needle bottom-left -->
<path d="M0 470 L26 440 L34 448 L6 496 L0 496 Z" fill="#c3d3dd" opacity=".45" filter="url(#b2)"/>
<path d="M-2 490 L27 446" stroke="#d9e1e8" stroke-width="7" opacity=".85" filter="url(#b05)"/>
<path d="M2 492 L30 448" stroke="#26343f" stroke-width="1.8" stroke-dasharray="3.5 4" opacity=".8"/>
<path d="M44 387 L58 377" stroke="#d3e3ec" stroke-width="1.5" opacity=".7"/>
<!-- small pills -->
<circle cx="152.9" cy="436.3" r="7.6" fill="#f2f7fa" filter="url(#b05)"/><circle cx="152.9" cy="436.3" r="4" fill="#efe9e2" opacity=".7"/>
<circle cx="2" cy="283" r="7" fill="#eef5f8" filter="url(#b1)"/>
</svg><svg width="663.5" height="496.4" viewBox="0 0 663.5 496.4" style="left:0;top:0"><defs><linearGradient id="eg" x1="0" y1="0" x2="0" y2="1"><stop offset="0" stop-color="#e6eeff"/><stop offset=".5" stop-color="#cddcfc"/><stop offset="1" stop-color="#a6c1f7"/></linearGradient><linearGradient id="pg" x1="0" y1="0" x2="0" y2="1"><stop offset="0" stop-color="#9068ba"/><stop offset=".35" stop-color="#8258ae"/><stop offset="1" stop-color="#6f4a97"/></linearGradient><filter id="sb" x="-10%" y="-20%" width="120%" height="140%"><feGaussianBlur stdDeviation="1.2"/></filter></defs><rect x="117.0" y="78.7" width="414.4" height="52.9" fill="#281e46" opacity=".6" filter="url(#sb)"/><rect x="116.0" y="76.2" width="415.4" height="53.4" fill="url(#pg)"/><rect x="116.0" y="76.2" width="415.4" height="1.2" fill="#fff" opacity=".28"/><rect x="116.0" y="128.4" width="415.4" height="1.2" fill="#000" opacity=".18"/><rect x="9.70" y="232.60" width="112.10" height="57.60" fill="#4f81bd" stroke="#3d6394" stroke-width="1.8"/><rect x="11.30" y="314.00" width="109.70" height="61.60" fill="#4f81bd" stroke="#3d6394" stroke-width="1.8"/><rect x="10.10" y="398.90" width="108.90" height="46.10" fill="#4f81bd" stroke="#3d6394" stroke-width="1.8"/><rect x="141.40" y="260.30" width="116.80" height="61.50" fill="#4f81bd" stroke="#3d6394" stroke-width="1.8"/><rect x="148.10" y="341.70" width="105.00" height="47.40" fill="#4f81bd" stroke="#3d6394" stroke-width="1.8"/><rect x="291.30" y="235.00" width="97.60" height="46.50" fill="#4f81bd" stroke="#3d6394" stroke-width="1.8"/><rect x="280.20" y="306.90" width="124.90" height="71.10" fill="#4f81bd" stroke="#3d6394" stroke-width="1.8"/><rect x="416.00" y="264.20" width="105.00" height="45.80" fill="#4f81bd" stroke="#3d6394" stroke-width="1.8"/><rect x="421.20" y="341.70" width="93.90" height="42.60" fill="#4f81bd" stroke="#3d6394" stroke-width="1.8"/><rect x="407.30" y="406.00" width="124.80" height="70.90" fill="#4f81bd" stroke="#3d6394" stroke-width="1.8"/><rect x="550.50" y="213.30" width="91.10" height="29.50" fill="#4f81bd" stroke="#3d6394" stroke-width="1.8"/><rect x="547.30" y="261.40" width="103.80" height="46.60" fill="#4f81bd" stroke="#3d6394" stroke-width="1.8"/><rect x="532.30" y="325.90" width="122.80" height="63.20" fill="#4f81bd" stroke="#3d6394" stroke-width="1.8"/><polygon points="55.3,207.1 63.0,207.1 63.0,222.4 66.6,222.4 59.1,228.9 51.7,222.4 55.3,222.4" fill="#4f81bd" stroke="#3d6394" stroke-width="1.4" stroke-linejoin="miter"/><polygon points="197.2,242.4 205.2,242.4 205.2,251.4 209.0,251.4 201.2,258.2 193.4,251.4 197.2,251.4" fill="#4f81bd" stroke="#3d6394" stroke-width="1.4" stroke-linejoin="miter"/><polygon points="336.1,207.1 345.5,207.1 345.5,221.0 350.0,221.0 340.8,228.9 331.6,221.0 336.1,221.0" fill="#4f81bd" stroke="#3d6394" stroke-width="1.4" stroke-linejoin="miter"/><polygon points="463.8,237.6 471.6,237.6 471.6,251.6 475.3,251.6 467.7,258.2 460.1,251.6 463.8,251.6" fill="#4f81bd" stroke="#3d6394" stroke-width="1.4" stroke-linejoin="miter"/><polygon points="596.6,198.0 602.9,198.0 602.9,208.5 605.8,208.5 599.8,213.9 593.7,208.5 596.6,208.5" fill="#4f81bd" stroke="#3d6394" stroke-width="1.4" stroke-linejoin="miter"/><polygon points="55.3,291.7 63.0,291.7 63.0,306.9 66.6,306.9 59.1,313.4 51.7,306.9 55.3,306.9" fill="#4f81bd" stroke="#3d6394" stroke-width="1.4" stroke-linejoin="miter"/><polygon points="55.3,377.1 63.0,377.1 63.0,391.9 66.6,391.9 59.1,398.4 51.7,391.9 55.3,391.9" fill="#4f81bd" stroke="#3d6394" stroke-width="1.4" stroke-linejoin="miter"/><polygon points="197.0,325.3 208.1,325.3 208.1,333.4 213.7,333.4 202.6,341.5 191.4,333.4 197.0,333.4" fill="#4f81bd" stroke="#3d6394" stroke-width="1.4" stroke-linejoin="miter"/><polygon points="334.9,285.0 344.3,285.0 344.3,298.8 348.8,298.8 339.6,306.7 330.4,298.8 334.9,298.8" fill="#4f81bd" stroke="#3d6394" stroke-width="1.4" stroke-linejoin="miter"/><polygon points="464.9,312.7 474.5,312.7 474.5,333.3 479.3,333.3 469.7,341.5 460.1,333.3 464.9,333.3" fill="#4f81bd" stroke="#3d6394" stroke-width="1.4" stroke-linejoin="miter"/><polygon points="466.1,385.0 474.1,385.0 474.1,399.6 477.9,399.6 470.1,406.4 462.3,399.6 466.1,399.6" fill="#4f81bd" stroke="#3d6394" stroke-width="1.4" stroke-linejoin="miter"/><polygon points="594.4,306.7 602.1,306.7 602.1,319.9 605.8,319.9 598.2,326.5 590.7,319.9 594.4,319.9" fill="#4f81bd" stroke="#3d6394" stroke-width="1.4" stroke-linejoin="miter"/><polygon points="596.6,243.4 602.9,243.4 602.9,257.0 605.8,257.0 599.8,262.4 593.7,257.0 596.6,257.0" fill="#4f81bd" stroke="#3d6394" stroke-width="1.4" stroke-linejoin="miter"/><ellipse cx="64.35" cy="174.25" rx="59.35" ry="31.55" fill="#1e3c78" opacity=".35" filter="url(#sb)"/><ellipse cx="64.35" cy="173.05" rx="58.85" ry="31.05" fill="url(#eg)" stroke="#4a78c4" stroke-width="1.1"/><ellipse cx="201.00" cy="202.30" rx="71.40" ry="35.10" fill="#1e3c78" opacity=".35" filter="url(#sb)"/><ellipse cx="201.00" cy="201.10" rx="70.90" ry="34.60" fill="url(#eg)" stroke="#4a78c4" stroke-width="1.1"/><ellipse cx="342.05" cy="175.25" rx="65.35" ry="32.55" fill="#1e3c78" opacity=".35" filter="url(#sb)"/><ellipse cx="342.05" cy="174.05" rx="64.85" ry="32.05" fill="url(#eg)" stroke="#4a78c4" stroke-width="1.1"/><ellipse cx="466.90" cy="194.80" rx="62.70" ry="41.40" fill="#1e3c78" opacity=".35" filter="url(#sb)"/><ellipse cx="466.90" cy="193.60" rx="62.20" ry="40.90" fill="url(#eg)" stroke="#4a78c4" stroke-width="1.1"/><ellipse cx="596.10" cy="163.75" rx="62.10" ry="31.35" fill="#1e3c78" opacity=".35" filter="url(#sb)"/><ellipse cx="596.10" cy="162.55" rx="61.60" ry="30.85" fill="url(#eg)" stroke="#4a78c4" stroke-width="1.1"/></svg><span class="tx" style="left:337.4px;top:16.6px;font:bold 21.5px/1 'Liberation Serif',serif;color:#000;letter-spacing:0.289px">ГЛАВА I. ТЕОРЕТИЧЕСКИЕ ОСНОВЫ ИЗУЧЕНИЯ</span><span class="tx" style="left:337.7px;top:43.5px;font:bold 21.5px/1 'Liberation Serif',serif;color:#000;letter-spacing:0.334px">ЖЕЛУДОЧНО-КИШЕЧНЫХ  КРОВОТЕЧЕНИЙ</span><span class="tx" style="left:324.2px;top:95.7px;font:15px/1 'Liberation Sans',sans-serif;color:#fff;letter-spacing:0.212px">Причины желудочно- кишечных кровотечений</span><span class="tx" style="left:65.5px;top:233.8px;font:15.1px/1 'Liberation Sans',sans-serif;color:#fff;letter-spacing:0.000px">Варикозное</span><span class="tx" style="left:65.5px;top:253.5px;font:15.1px/1 'Liberation Sans',sans-serif;color:#fff;letter-spacing:0.000px">расширение</span><span class="tx" style="left:65.5px;top:273.6px;font:15.1px/1 'Liberation Sans',sans-serif;color:#fff;letter-spacing:0.000px">вен</span><span class="tx" style="left:66.0px;top:316.7px;font:15.1px/1 'Liberation Sans',sans-serif;color:#fff;letter-spacing:0.000px">Синдром</span><span class="tx" style="left:66.0px;top:336.5px;font:15.1px/1 'Liberation Sans',sans-serif;color:#fff;letter-spacing:0.000px">Мэллори-</span><span class="tx" style="left:66.0px;top:356.4px;font:15.1px/1 'Liberation Sans',sans-serif;color:#fff;letter-spacing:0.000px">Вейсса</span><span class="tx" style="left:64.4px;top:413.6px;font:15.1px/1 'Liberation Sans',sans-serif;color:#fff;letter-spacing:0.000px">Опухоли</span><span class="tx" style="left:199.6px;top:282.3px;font:15.1px/1 'Liberation Sans',sans-serif;color:#fff;letter-spacing:0.000px">Язвы и эрозии</span><span class="tx" style="left:200.4px;top:357.4px;font:15.1px/1 'Liberation Sans',sans-serif;color:#fff;letter-spacing:0.000px">Опухоли</span><span class="tx" style="left:339.9px;top:249.8px;font:15.1px/1 'Liberation Sans',sans-serif;color:#fff;letter-spacing:0.000px">Опухоли</span><span class="tx" style="left:342.5px;top:324.6px;font:15.1px/1 'Liberation Sans',sans-serif;color:#fff;letter-spacing:0.000px">Инфекционные</span><span class="tx" style="left:342.5px;top:344.4px;font:15.1px/1 'Liberation Sans',sans-serif;color:#fff;letter-spacing:0.000px">болезни</span><span class="tx" style="left:468.3px;top:278.3px;font:15.1px/1 'Liberation Sans',sans-serif;color:#fff;letter-spacing:0.000px">Опухоли</span><span class="tx" style="left:468.0px;top:354.7px;font:15.1px/1 'Liberation Sans',sans-serif;color:#fff;letter-spacing:0.000px">Колиты</span><span class="tx" style="left:469.5px;top:423.6px;font:15.1px/1 'Liberation Sans',sans-serif;color:#fff;letter-spacing:0.000px">Инфекционные</span><span class="tx" style="left:469.5px;top:443.7px;font:15.1px/1 'Liberation Sans',sans-serif;color:#fff;letter-spacing:0.000px">болезни</span><span class="tx" style="left:595.8px;top:219.8px;font:15.1px/1 'Liberation Sans',sans-serif;color:#fff;letter-spacing:0.000px">Геморрой</span><span class="tx" style="left:599.0px;top:276.8px;font:15.1px/1 'Liberation Sans',sans-serif;color:#fff;letter-spacing:0.000px">Опухоли</span><span class="tx" style="left:593.5px;top:339.6px;font:15.1px/1 'Liberation Sans',sans-serif;color:#fff;letter-spacing:0.000px">Инфекционные</span><span class="tx" style="left:593.5px;top:359.4px;font:15.1px/1 'Liberation Sans',sans-serif;color:#fff;letter-spacing:0.000px">болезни</span><span class="tx" style="left:64.1px;top:164.9px;font:bold 15.6px/1 'Liberation Sans',sans-serif;color:#000;letter-spacing:-0.572px">пищевод</span><span class="tx" style="left:200.7px;top:173.9px;font:bold 15.6px/1 'Liberation Sans',sans-serif;color:#000;letter-spacing:-0.525px">Желудок и</span><span class="tx" style="left:200.8px;top:193.7px;font:bold 15.6px/1 'Liberation Sans',sans-serif;color:#000;letter-spacing:-0.487px">12 перстная</span><span class="tx" style="left:200.7px;top:213.5px;font:bold 15.6px/1 'Liberation Sans',sans-serif;color:#000;letter-spacing:-0.541px">кишка</span><span class="tx" style="left:341.8px;top:155.7px;font:bold 15.6px/1 'Liberation Sans',sans-serif;color:#000;letter-spacing:-0.524px">Тонкий</span><span class="tx" style="left:341.8px;top:175.5px;font:bold 15.6px/1 'Liberation Sans',sans-serif;color:#000;letter-spacing:-0.538px">кишечник</span><span class="tx" style="left:466.6px;top:174.7px;font:bold 15.6px/1 'Liberation Sans',sans-serif;color:#000;letter-spacing:-0.549px">Толстый</span><span class="tx" style="left:466.6px;top:194.5px;font:bold 15.6px/1 'Liberation Sans',sans-serif;color:#000;letter-spacing:-0.538px">кишечник</span><span class="tx" style="left:595.8px;top:145.1px;font:bold 15.6px/1 'Liberation Sans',sans-serif;color:#000;letter-spacing:-0.565px">Прямая</span><span class="tx" style="left:595.8px;top:164.9px;font:bold 15.6px/1 'Liberation Sans',sans-serif;color:#000;letter-spacing:-0.541px">кишка</span></div>
<div class="a" style="left:214px;top:643px;width:1126px;height:1px;background:#c6c6c6"></div>
<span class="t" style="left:225.7px;top:653.4px;font:14.5px/1 'Liberation Sans',sans-serif;height:14.5px;color:#555;letter-spacing:-0.084px;">Заметки к слайду</span>
<div class="a" style="left:0;top:677px;width:1340px;height:18px;background:#f1f1f1;border-top:1px solid #cfcfcf"></div>
<span class="t" style="left:6.3px;top:680.9px;font:11.6px/1 'Liberation Sans',sans-serif;height:11.6px;color:#444;letter-spacing:-0.421px;">Слайд 5 из 31</span>
<span class="t" style="left:127.5px;top:680.9px;font:11.6px/1 'Liberation Sans',sans-serif;height:11.6px;color:#444;letter-spacing:0.011px;">русский</span>
<span class="t" style="left:846.1px;top:681.9px;font:11.6px/1 'Liberation Sans',sans-serif;height:11.6px;color:#444;letter-spacing:-0.095px;">Заметки</span>
<span class="t" style="left:927.9px;top:681.9px;font:11.6px/1 'Liberation Sans',sans-serif;height:11.6px;color:#444;letter-spacing:0.073px;">Примечания</span>
<div class="a" style="left:1015px;top:678px;width:38px;height:17px;background:#c8c8c8"></div>
<span class="t" style="left:1309.9px;top:681.7px;font:11.6px/1 'Liberation Sans',sans-serif;height:11.6px;color:#444;letter-spacing:-1.206px;">69%</span>
<div class="a" style="left:1182px;top:687px;width:100px;height:1px;background:#8a8a8a"></div>
<div class="a" style="left:1232px;top:684.5px;width:1px;height:6px;background:#8a8a8a"></div>
<div class="a" style="left:1214.5px;top:682px;width:3.5px;height:11px;background:#555"></div>
<div class="a" style="left:1171.5px;top:686.5px;width:6px;height:2px;background:#444"></div>
<div class="a" style="left:1286px;top:686.5px;width:8px;height:2px;background:#444"></div>
<div class="a" style="left:1289px;top:683.5px;width:2px;height:8px;background:#444"></div>
<svg width="1340" height="695" viewBox="0 0 1340 695" style="left:0;top:0"><g fill="none" stroke="#555" stroke-width="1"><path d="M103 683.2 C101 682,98.4 682,96.4 683.2 V692.4 C98.4 691.2,101 691.2,103 692.4 Z"/><path d="M103 683.2 C104.4 682.4,105.6 682.2,107 682.2 M103 692.4 C104.4 691.6,105.6 691.4,107 691.4 V689.6"/><path d="M103 692.4 V694.4"/></g><path d="M105.6 690.2 L106.2 687.8 L110 683.2 L111.8 684.8 L108 689.4 Z" fill="#fff" stroke="#555" stroke-width=".9"/><path d="M830.4 686.4 H840.8 M830.4 689.4 H840.8 M830.4 692.4 H840.8" stroke="#555" stroke-width="1.1"/><path d="M833.2 684.2 L835.7 681.6 L838.2 684.2 Z" fill="#555"/><path d="M911 682.2 H922.8 V690.4 H917.2 L914.4 693.6 V690.4 H911 Z" fill="#666"/><g fill="none" stroke="#555" stroke-width="1.1"><rect x="1027.8" y="681.4" width="13.4" height="11.6"/><path d="M1031.2 681.4 V693 M1031.2 689.6 H1041.2"/><rect x="1033.4" y="683.6" width="5.6" height="3.6"/></g><g fill="none" stroke="#555" stroke-width="1.1"><rect x="1065.4" y="681.6" width="4.8" height="3.8"/><rect x="1073.6" y="681.6" width="4.8" height="3.8"/><rect x="1065.4" y="688.6" width="4.8" height="3.8"/><rect x="1073.6" y="688.6" width="4.8" height="3.8"/></g><g fill="none" stroke="#555" stroke-width="1"><path d="M1109.4 683 C1107.6 682,1105.4 682,1103.4 683 V692 C1105.4 691,1107.6 691,1109.4 692 C1111.2 691,1113.4 691,1115.4 692 V683 C1113.4 682,1111.2 682,1109.4 683 Z M1109.4 683 V693.8"/><path d="M1104.8 685 H1108 M1104.8 687 H1108 M1104.8 689 H1108 M1110.8 685 H1114 M1110.8 687 H1114 M1110.8 689 H1114" stroke-width=".8"/></g><g fill="none" stroke="#555" stroke-width="1.2"><path d="M1141 682.4 H1155"/><path d="M1142.6 682.6 V688.6 H1153.4 V682.6"/><path d="M1148 688.6 V692.6 M1145 693 H1151"/></g></svg>
</div></body></html>
